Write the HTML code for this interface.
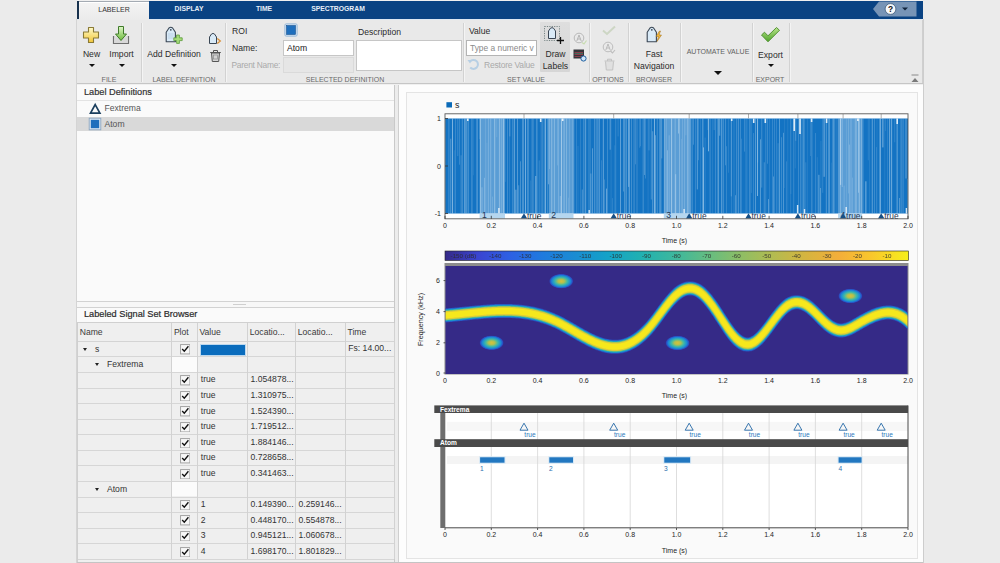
<!DOCTYPE html>
<html><head><meta charset="utf-8">
<style>
html,body{margin:0;padding:0;}
body{width:1000px;height:563px;overflow:hidden;position:relative;background:#ebebeb;font-family:"Liberation Sans",sans-serif;color:#333;}
.a{position:absolute;}
.t{position:absolute;white-space:nowrap;line-height:1;}
.c{transform:translateX(-50%);}
.sep{position:absolute;top:23px;height:59px;width:1px;background:#d2d2d2;border-right:1px solid #f4f4f4;}
.sl{position:absolute;top:75.5px;font-size:7px;color:#6a6a6a;white-space:nowrap;line-height:1;transform:translateX(-50%);}
.bt{position:absolute;font-size:8.6px;color:#2b2b2b;white-space:nowrap;line-height:1;transform:translateX(-50%);}
.arr{position:absolute;width:0;height:0;border-left:3px solid transparent;border-right:3px solid transparent;border-top:3px solid #111;}
.tab{position:absolute;top:6px;font-size:6.8px;font-weight:bold;color:#e6eef7;white-space:nowrap;line-height:1;transform:translateX(-50%);}
</style></head><body>
<!-- app frame -->
<div class="a" style="left:77px;top:0;width:846px;height:563px;background:#f0f0f0;"></div>
<!-- tab bar -->
<div class="a" style="left:77px;top:1px;width:846px;height:17.5px;background:#0a4383;"></div>
<div class="a" style="left:77px;top:18.5px;width:846px;height:1.5px;background:#dde7f1;"></div>
<div class="a" style="left:77px;top:1px;width:2px;height:17.5px;background:#17314d;"></div>
<div class="a" style="left:79px;top:1px;width:70px;height:18px;background:linear-gradient(#f4f4f4,#ebebeb);border-top:1px solid #a4abb3;box-shadow:inset 0 1px 0 #ffffff;"></div>
<div class="tab" style="left:114px;color:#333;font-weight:normal;font-size:7px;">LABELER</div>
<div class="tab" style="left:189px;">DISPLAY</div>
<div class="tab" style="left:264px;">TIME</div>
<div class="tab" style="left:338px;">SPECTROGRAM</div>
<!-- help button -->
<svg class="a" style="left:872px;top:1px;" width="45" height="16" viewBox="0 0 45 16">
<path d="M7 0.5 H44.5 V15.5 H7 L1 8 Z" fill="#7794b6"/>
<circle cx="18.5" cy="8" r="5.4" fill="#f6f8fa" stroke="#2c4d70" stroke-width="0.7"/>
<text x="18.5" y="11" font-size="8.4" font-weight="bold" text-anchor="middle" fill="#111" font-family="Liberation Sans">?</text>
<path d="M30 6.5 L36 6.5 L33 9.5 Z" fill="#10243d"/>
</svg>
<!-- toolstrip -->
<div class="a" style="left:77px;top:20px;width:845px;height:63px;background:#e9e9e9;border-right:1px solid #cfcfcf;"></div>
<div class="a" style="left:77px;top:83.2px;width:846px;height:1.3px;background:#c6c6c6;"></div>
<div class="a" style="left:77px;top:84.5px;width:846px;height:0.8px;background:#fbfbfb;"></div>
<div class="sep" style="left:141px;"></div>
<div class="sep" style="left:225px;"></div>
<div class="sep" style="left:463px;"></div>
<div class="sep" style="left:589px;"></div>
<div class="sep" style="left:627.5px;"></div>
<div class="sep" style="left:680px;"></div>
<div class="sep" style="left:752px;"></div>
<div class="sep" style="left:789px;"></div>
<div class="sl" style="left:109px;">FILE</div>
<div class="sl" style="left:184px;">LABEL DEFINITION</div>
<div class="sl" style="left:345px;">SELECTED DEFINITION</div>
<div class="sl" style="left:526px;">SET VALUE</div>
<div class="sl" style="left:608px;">OPTIONS</div>
<div class="sl" style="left:654px;">BROWSER</div>
<div class="sl" style="left:770px;">EXPORT</div>
<!-- FILE section -->
<svg class="a" style="left:82px;top:26px;" width="18" height="18" viewBox="0 0 18 18">
<defs><linearGradient id="gy" x1="0" y1="0" x2="0" y2="1"><stop offset="0" stop-color="#fffbc8"/><stop offset="1" stop-color="#f2c63a"/></linearGradient></defs>
<path d="M6.5 1.5 H11.5 V6 H16.5 V12 H11.5 V16.5 H6.5 V12 H1.5 V6 H6.5 Z" fill="url(#gy)" stroke="#8a7a36" stroke-width="1.1" stroke-linejoin="round"/>
</svg>
<svg class="a" style="left:112px;top:25px;" width="18" height="20" viewBox="0 0 18 20">
<defs><linearGradient id="gg" x1="0" y1="0" x2="0" y2="1"><stop offset="0" stop-color="#dff7c8"/><stop offset="1" stop-color="#6dbb3c"/></linearGradient></defs>
<path d="M1.5 11 V18.5 H16.5 V11" fill="#dcdcdc" stroke="#6f6f6f" stroke-width="1.2"/>
<rect x="2.2" y="13" width="13.6" height="4.8" fill="#d8d8d8"/>
<path d="M6.5 1.5 H11.5 V9 H14.5 L9 15.5 L3.5 9 H6.5 Z" fill="url(#gg)" stroke="#3f7a2a" stroke-width="1" stroke-linejoin="round"/>
</svg>
<div class="bt" style="left:91.5px;top:50px;">New</div>
<div class="bt" style="left:121.5px;top:50px;">Import</div>
<div class="arr" style="left:88.5px;top:63.5px;"></div>
<div class="arr" style="left:119px;top:63.5px;"></div>
<!-- LABEL DEFINITION -->
<svg class="a" style="left:164px;top:26px;" width="20" height="19" viewBox="0 0 20 19">
<path d="M2.2 15.8 V6.2 L5 2 Q6.8 0.6 8.6 2 L11.4 6.2 V15.8 Z" fill="#d9eaf7" stroke="#3a4654" stroke-width="1.1" stroke-linejoin="round"/>
<circle cx="6.8" cy="3.8" r="0.9" fill="#3e4b5a"/>
<path d="M4 8 H9.5 M4 10 H9.5 M4 12 H9.5" stroke="#a9c5dd" stroke-width="0.6"/>
<path d="M12.6 9 H15.4 V11.8 H18.2 V14.6 H15.4 V17.4 H12.6 V14.6 H9.8 V11.8 H12.6 Z" fill="#a6dc7a" stroke="#5a9a3a" stroke-width="0.8"/>
</svg>
<div class="bt" style="left:174px;top:50px;">Add Definition</div>
<div class="arr" style="left:171px;top:63.5px;"></div>
<svg class="a" style="left:208px;top:32px;" width="14" height="13" viewBox="0 0 14 13">
<path d="M1.5 11.5 V5 L3.5 2 Q5 0.8 6.5 2 L8.5 5 V11.5 Z" fill="#d9eaf7" stroke="#3a4654" stroke-width="1" stroke-linejoin="round"/>
<path d="M9.3 6.5 L12.3 9 L9.3 11.5" fill="none" stroke="#d9913a" stroke-width="1.3"/>
</svg>
<svg class="a" style="left:209px;top:49px;" width="13" height="14" viewBox="0 0 13 14">
<path d="M2.5 4 L3.3 12.5 H9.7 L10.5 4 Z" fill="#d4d4d4" stroke="#555" stroke-width="1"/><path d="M1.2 3.5 H11.8 M4.5 3.5 V1.5 H8.5 V3.5" fill="none" stroke="#555" stroke-width="1"/>
<rect x="4.5" y="6" width="4" height="4" fill="none" stroke="#8a8a8a" stroke-width="0.7"/>
</svg>
<!-- SELECTED DEFINITION -->
<div class="t" style="left:232px;top:26.5px;font-size:8.6px;color:#2b2b2b;">ROI</div>
<div class="t" style="left:232px;top:43.5px;font-size:8.6px;color:#2b2b2b;">Name:</div>

<svg class="a" style="left:284px;top:23px;" width="14" height="14" viewBox="0 0 14 14">
<rect x="0.8" y="0.8" width="12.4" height="12.4" rx="1.5" fill="#cfe0f0" stroke="#8fb2d4" stroke-width="0.8"/>
<rect x="2.6" y="2.6" width="8.8" height="8.8" fill="#1f6fbd" stroke="#0f4f8f" stroke-width="0.6"/>
</svg>
<div class="a" style="left:283px;top:39.5px;width:69px;height:14px;background:#fff;border:1px solid #c6c6c6;"></div>
<div class="t" style="left:287px;top:43.8px;font-size:8.6px;color:#1a1a1a;">Atom</div>
<div class="a" style="left:283px;top:57px;width:69px;height:14px;background:#e6e6e6;border:1px solid #dadada;"></div>
<div class="t" style="left:231.5px;top:60.5px;font-size:8.4px;color:#a9a9a9;letter-spacing:-0.25px;">Parent Name:</div>
<div class="t" style="left:358px;top:27.5px;font-size:8.6px;color:#2b2b2b;">Description</div>
<div class="a" style="left:355.5px;top:40px;width:104px;height:28.5px;background:#fff;border:1px solid #c6c6c6;"></div>
<!-- SET VALUE -->
<div class="t" style="left:469px;top:26.5px;font-size:8.6px;color:#2b2b2b;">Value</div>
<div class="a" style="left:466px;top:39.5px;width:69px;height:14px;background:#fff;border:1px solid #b4b4b4;"></div>
<div class="t" style="left:470px;top:43.5px;font-size:8.4px;color:#8a8a8a;">Type a numeric v</div>
<svg class="a" style="left:467px;top:58px;" width="14" height="13" viewBox="0 0 14 13">
<path d="M3 3.5 A4.5 4.5 0 1 1 3.2 9.5" fill="none" stroke="#b7cfe4" stroke-width="2"/>
<path d="M0.5 2 L5 2 L3 5.5 Z" fill="#b7cfe4"/>
</svg>
<div class="t" style="left:484px;top:60.5px;font-size:8.5px;color:#aaaaaa;letter-spacing:-0.2px;">Restore Value</div>
<div class="a" style="left:540px;top:22px;width:30px;height:50px;background:linear-gradient(#dedede,#d6d6d6);border-radius:1px;"></div>
<svg class="a" style="left:543px;top:25px;" width="22" height="20" viewBox="0 0 22 20">
<rect x="1.5" y="1.5" width="15" height="14" fill="none" stroke="#6b7b7b" stroke-width="0.9" stroke-dasharray="1.2 1.2"/>
<path d="M5.5 13.5 V6 L7.5 3.2 Q9 2.2 10.5 3.2 L12.5 6 V13.5 Z" fill="#d9eaf7" stroke="#3a4654" stroke-width="1" stroke-linejoin="round"/>
<path d="M17.5 12 V19 M14 15.5 H21" stroke="#111" stroke-width="1.3"/>
</svg>
<div class="bt" style="left:555.5px;top:49.5px;">Draw</div>
<div class="bt" style="left:555.5px;top:61.8px;">Labels</div>
<svg class="a" style="left:573px;top:32px;" width="14" height="13" viewBox="0 0 14 13">
<circle cx="6" cy="6" r="4.8" fill="none" stroke="#b9b9b9" stroke-width="1"/>
<path d="M3.8 9 L6 3 L8.2 9 M4.6 7 H7.4" fill="none" stroke="#b0b0b0" stroke-width="0.9"/>
<path d="M9 10.5 L11 12 L13.5 8.5" fill="none" stroke="#c8dcb0" stroke-width="1.2"/>
</svg>
<svg class="a" style="left:573px;top:49px;" width="14" height="13" viewBox="0 0 14 13">
<rect x="0.5" y="0.5" width="10.5" height="9" fill="#34353a"/>
<path d="M1.5 3.5 H10 M1.5 5.5 H10 M1.5 7.5 H10" stroke="#a04050" stroke-width="0.8"/>
<path d="M1.5 4.5 H10" stroke="#3f8f6f" stroke-width="0.6"/>
<circle cx="10.5" cy="9.5" r="2.6" fill="#cfe6fb" stroke="#1f5f9f" stroke-width="1"/>
</svg>
<!-- OPTIONS -->
<svg class="a" style="left:602px;top:25px;" width="14" height="11" viewBox="0 0 14 11">
<path d="M1 5.5 L5 9 L13 1.5" fill="none" stroke="#cdd6c4" stroke-width="2"/>
</svg>
<svg class="a" style="left:602px;top:41px;" width="14" height="13" viewBox="0 0 14 13">
<circle cx="6" cy="6" r="4.8" fill="none" stroke="#bdbdbd" stroke-width="1"/>
<path d="M3.8 9 L6 3 L8.2 9 M4.6 7 H7.4" fill="none" stroke="#b5b5b5" stroke-width="0.9"/>
<path d="M8.5 10 L10.5 12 L13 9" fill="none" stroke="#bdbdbd" stroke-width="1.1"/>
</svg>
<svg class="a" style="left:603px;top:58px;" width="13" height="13" viewBox="0 0 13 13">
<path d="M1.5 3 H11.5 M4.5 3 V1.2 H8.5 V3 M2.5 3.5 L3.3 12 H9.7 L10.5 3.5" fill="#e0e0e0" stroke="#c2c2c2" stroke-width="1"/>
</svg>
<!-- BROWSER -->
<svg class="a" style="left:645px;top:26px;" width="18" height="18" viewBox="0 0 18 18">
<path d="M2.2 15.8 V6.2 L5 2 Q6.8 0.6 8.6 2 L11.4 6.2 V15.8 Z" fill="#d9eaf7" stroke="#3a4654" stroke-width="1.1" stroke-linejoin="round"/>
<circle cx="6.8" cy="3.8" r="0.9" fill="#3e4b5a"/>
<path d="M14.5 5 L11 10.5 H13.5 L12 15.5 L16.5 9 H14 L15.5 5 Z" fill="#f2b83a" stroke="#9a6a1a" stroke-width="0.5"/>
</svg>
<div class="bt" style="left:654px;top:49.5px;">Fast</div>
<div class="bt" style="left:654px;top:61.8px;">Navigation</div>
<!-- AUTOMATE VALUE -->
<div class="t c" style="left:718px;top:47.5px;font-size:7px;color:#5f5f5f;">AUTOMATE VALUE</div>
<div class="arr" style="left:714px;top:70.5px;border-left-width:4.5px;border-right-width:4.5px;border-top-width:4.5px;"></div>
<!-- EXPORT -->
<svg class="a" style="left:760px;top:26px;" width="21" height="18" viewBox="0 0 21 18">
<defs><linearGradient id="gc" x1="0" y1="0" x2="0" y2="1"><stop offset="0" stop-color="#b8e48a"/><stop offset="1" stop-color="#4fa32a"/></linearGradient></defs>
<path d="M1.5 9 L4.5 6.2 L8 9.8 L16.5 1.5 L19.5 4.3 L8 15.8 Z" fill="url(#gc)" stroke="#4a8a2a" stroke-width="0.9" stroke-linejoin="round"/>
</svg>
<div class="bt" style="left:770.5px;top:50.7px;">Export</div>
<div class="arr" style="left:767.5px;top:63.5px;"></div>
<!-- collapse -->
<svg class="a" style="left:910px;top:73.5px;" width="10" height="9" viewBox="0 0 10 9">
<path d="M1.5 1 H8.5" stroke="#8a8a8a" stroke-width="1"/>
<path d="M1.5 8 L5 4 L8.5 8 Z" fill="#7a7a7a"/>
</svg>

<!-- LEFT PANEL -->
<div class="a" style="left:77px;top:85px;width:317px;height:478px;background:#f5f5f5;border-right:1px solid #c9c9c9;"></div>
<div class="a" style="left:77px;top:85px;width:317px;height:216px;background:#fafafa;"></div>
<div class="a" style="left:77px;top:100px;width:317px;height:1px;background:#e3e3e3;"></div>
<div class="t" style="left:84px;top:87.5px;font-size:9.2px;color:#333;-webkit-text-stroke:0.2px #333;">Label Definitions</div>
<svg class="a" style="left:88px;top:102px;" width="14" height="13" viewBox="0 0 14 13">
<path d="M7.2 2.6 L11.9 11.2 H2.5 Z" fill="none" stroke="#1b3f5e" stroke-width="1.7" stroke-linejoin="miter"/>
</svg>
<div class="t" style="left:104.5px;top:104px;font-size:8.6px;color:#555;">Fextrema</div>
<div class="a" style="left:77px;top:117px;width:317px;height:13.5px;background:#d9d9d9;"></div>
<svg class="a" style="left:88px;top:117px;" width="14" height="14" viewBox="0 0 14 14">
<rect x="1.2" y="1.2" width="11.6" height="11.6" fill="#dfe9f3" stroke="#8aa7c2" stroke-width="0.9"/>
<rect x="2.8" y="2.8" width="8.4" height="8.4" fill="#1f6fbd"/>
</svg>
<div class="t" style="left:104.5px;top:119.5px;font-size:8.6px;color:#555;">Atom</div>
<!-- sash -->
<div class="a" style="left:77px;top:301px;width:317px;height:1px;background:#d2d2d2;"></div>
<div class="a" style="left:77px;top:302px;width:317px;height:4.5px;background:#f7f7f7;"></div>
<div class="a" style="left:233px;top:303.5px;width:13px;height:1px;background:#cfcfcf;"></div>
<div class="a" style="left:77px;top:306.5px;width:317px;height:1px;background:#d2d2d2;"></div>
<div class="a" style="left:77px;top:307.5px;width:317px;height:15px;background:#fafafa;"></div>
<div class="t" style="left:84px;top:309.5px;font-size:9.2px;color:#2a2a2a;-webkit-text-stroke:0.2px #2a2a2a;">Labeled Signal Set Browser</div>
<div class="a" style="left:77px;top:322px;width:317px;height:1px;background:#d0d0d0;"></div>
<div class="a" style="left:77.5px;top:323.0px;width:316.5px;height:240.0px;background:#efefef;"></div>
<div class="t" style="left:79.7px;top:328.2px;font-size:8.6px;color:#3a3a3a;">Name</div>
<div class="t" style="left:173.9px;top:328.2px;font-size:8.6px;color:#3a3a3a;">Plot</div>
<div class="t" style="left:199.5px;top:328.2px;font-size:8.6px;color:#3a3a3a;">Value</div>
<div class="t" style="left:249.8px;top:328.2px;font-size:8.6px;color:#3a3a3a;">Locatio...</div>
<div class="t" style="left:297.8px;top:328.2px;font-size:8.6px;color:#3a3a3a;">Locatio...</div>
<div class="t" style="left:347.5px;top:328.2px;font-size:8.6px;color:#3a3a3a;">Time</div>
<div class="a" style="left:77.5px;top:340.8px;width:316.5px;height:1px;background:#d4d4d4;"></div>
<div class="a" style="left:77.5px;top:356.4px;width:316.5px;height:1px;background:#d6d6d6;"></div>
<div class="arr" style="left:83.4px;top:347.6px;border-left-width:2.5px;border-right-width:2.5px;border-top-width:3px;border-top-color:#222;"></div>
<div class="t" style="left:95.0px;top:344.8px;font-size:8.6px;color:#333;">s</div>
<svg class="a" style="left:179.8px;top:344.1px;" width="10.5" height="10.5" viewBox="0 0 11 11"><rect x="0.6" y="0.6" width="9.8" height="9.8" fill="#f7f7f7" stroke="#a0a0a0" stroke-width="1"/><path d="M2.3 5.2 L4.5 7.6 L8.8 2.4" fill="none" stroke="#111" stroke-width="1.4"/></svg>
<div class="a" style="left:200.2px;top:344.3px;width:44px;height:10px;background:#0a6cbd;border:0.5px solid #bcd8ef;"></div>
<div class="t" style="left:348.3px;top:344.3px;font-size:8.6px;color:#333;">Fs: 14.00...</div>
<div class="a" style="left:172.2px;top:357.4px;width:24.6px;height:14.6px;background:#fbfbfb;"></div>
<div class="a" style="left:77.5px;top:371.9px;width:316.5px;height:1px;background:#d6d6d6;"></div>
<div class="arr" style="left:95.4px;top:363.2px;border-left-width:2.5px;border-right-width:2.5px;border-top-width:3px;border-top-color:#222;"></div>
<div class="t" style="left:107.0px;top:360.4px;font-size:8.6px;color:#333;">Fextrema</div>
<div class="a" style="left:77.5px;top:387.5px;width:316.5px;height:1px;background:#d6d6d6;"></div>
<svg class="a" style="left:179.8px;top:375.2px;" width="10.5" height="10.5" viewBox="0 0 11 11"><rect x="0.6" y="0.6" width="9.8" height="9.8" fill="#f7f7f7" stroke="#a0a0a0" stroke-width="1"/><path d="M2.3 5.2 L4.5 7.6 L8.8 2.4" fill="none" stroke="#111" stroke-width="1.4"/></svg>
<div class="t" style="left:200.8px;top:375.4px;font-size:8.6px;color:#333;">true</div>
<div class="t" style="left:250.6px;top:375.4px;font-size:8.6px;color:#333;">1.054878...</div>
<div class="a" style="left:77.5px;top:403.1px;width:316.5px;height:1px;background:#d6d6d6;"></div>
<svg class="a" style="left:179.8px;top:390.8px;" width="10.5" height="10.5" viewBox="0 0 11 11"><rect x="0.6" y="0.6" width="9.8" height="9.8" fill="#f7f7f7" stroke="#a0a0a0" stroke-width="1"/><path d="M2.3 5.2 L4.5 7.6 L8.8 2.4" fill="none" stroke="#111" stroke-width="1.4"/></svg>
<div class="t" style="left:200.8px;top:391.0px;font-size:8.6px;color:#333;">true</div>
<div class="t" style="left:250.6px;top:391.0px;font-size:8.6px;color:#333;">1.310975...</div>
<div class="a" style="left:77.5px;top:418.7px;width:316.5px;height:1px;background:#d6d6d6;"></div>
<svg class="a" style="left:179.8px;top:406.4px;" width="10.5" height="10.5" viewBox="0 0 11 11"><rect x="0.6" y="0.6" width="9.8" height="9.8" fill="#f7f7f7" stroke="#a0a0a0" stroke-width="1"/><path d="M2.3 5.2 L4.5 7.6 L8.8 2.4" fill="none" stroke="#111" stroke-width="1.4"/></svg>
<div class="t" style="left:200.8px;top:406.6px;font-size:8.6px;color:#333;">true</div>
<div class="t" style="left:250.6px;top:406.6px;font-size:8.6px;color:#333;">1.524390...</div>
<div class="a" style="left:77.5px;top:434.2px;width:316.5px;height:1px;background:#d6d6d6;"></div>
<svg class="a" style="left:179.8px;top:421.9px;" width="10.5" height="10.5" viewBox="0 0 11 11"><rect x="0.6" y="0.6" width="9.8" height="9.8" fill="#f7f7f7" stroke="#a0a0a0" stroke-width="1"/><path d="M2.3 5.2 L4.5 7.6 L8.8 2.4" fill="none" stroke="#111" stroke-width="1.4"/></svg>
<div class="t" style="left:200.8px;top:422.1px;font-size:8.6px;color:#333;">true</div>
<div class="t" style="left:250.6px;top:422.1px;font-size:8.6px;color:#333;">1.719512...</div>
<div class="a" style="left:77.5px;top:449.8px;width:316.5px;height:1px;background:#d6d6d6;"></div>
<svg class="a" style="left:179.8px;top:437.5px;" width="10.5" height="10.5" viewBox="0 0 11 11"><rect x="0.6" y="0.6" width="9.8" height="9.8" fill="#f7f7f7" stroke="#a0a0a0" stroke-width="1"/><path d="M2.3 5.2 L4.5 7.6 L8.8 2.4" fill="none" stroke="#111" stroke-width="1.4"/></svg>
<div class="t" style="left:200.8px;top:437.7px;font-size:8.6px;color:#333;">true</div>
<div class="t" style="left:250.6px;top:437.7px;font-size:8.6px;color:#333;">1.884146...</div>
<div class="a" style="left:77.5px;top:465.4px;width:316.5px;height:1px;background:#d6d6d6;"></div>
<svg class="a" style="left:179.8px;top:453.1px;" width="10.5" height="10.5" viewBox="0 0 11 11"><rect x="0.6" y="0.6" width="9.8" height="9.8" fill="#f7f7f7" stroke="#a0a0a0" stroke-width="1"/><path d="M2.3 5.2 L4.5 7.6 L8.8 2.4" fill="none" stroke="#111" stroke-width="1.4"/></svg>
<div class="t" style="left:200.8px;top:453.3px;font-size:8.6px;color:#333;">true</div>
<div class="t" style="left:250.6px;top:453.3px;font-size:8.6px;color:#333;">0.728658...</div>
<div class="a" style="left:77.5px;top:480.9px;width:316.5px;height:1px;background:#d6d6d6;"></div>
<svg class="a" style="left:179.8px;top:468.7px;" width="10.5" height="10.5" viewBox="0 0 11 11"><rect x="0.6" y="0.6" width="9.8" height="9.8" fill="#f7f7f7" stroke="#a0a0a0" stroke-width="1"/><path d="M2.3 5.2 L4.5 7.6 L8.8 2.4" fill="none" stroke="#111" stroke-width="1.4"/></svg>
<div class="t" style="left:200.8px;top:468.9px;font-size:8.6px;color:#333;">true</div>
<div class="t" style="left:250.6px;top:468.9px;font-size:8.6px;color:#333;">0.341463...</div>
<div class="a" style="left:172.2px;top:481.9px;width:24.6px;height:14.6px;background:#fbfbfb;"></div>
<div class="a" style="left:77.5px;top:496.5px;width:316.5px;height:1px;background:#d6d6d6;"></div>
<div class="arr" style="left:95.4px;top:487.7px;border-left-width:2.5px;border-right-width:2.5px;border-top-width:3px;border-top-color:#222;"></div>
<div class="t" style="left:107.0px;top:484.9px;font-size:8.6px;color:#333;">Atom</div>
<div class="a" style="left:77.5px;top:512.1px;width:316.5px;height:1px;background:#d6d6d6;"></div>
<svg class="a" style="left:179.8px;top:499.8px;" width="10.5" height="10.5" viewBox="0 0 11 11"><rect x="0.6" y="0.6" width="9.8" height="9.8" fill="#f7f7f7" stroke="#a0a0a0" stroke-width="1"/><path d="M2.3 5.2 L4.5 7.6 L8.8 2.4" fill="none" stroke="#111" stroke-width="1.4"/></svg>
<div class="t" style="left:200.8px;top:500.0px;font-size:8.6px;color:#333;">1</div>
<div class="t" style="left:250.6px;top:500.0px;font-size:8.6px;color:#333;">0.149390...</div>
<div class="t" style="left:298.6px;top:500.0px;font-size:8.6px;color:#333;">0.259146...</div>
<div class="a" style="left:77.5px;top:527.6px;width:316.5px;height:1px;background:#d6d6d6;"></div>
<svg class="a" style="left:179.8px;top:515.4px;" width="10.5" height="10.5" viewBox="0 0 11 11"><rect x="0.6" y="0.6" width="9.8" height="9.8" fill="#f7f7f7" stroke="#a0a0a0" stroke-width="1"/><path d="M2.3 5.2 L4.5 7.6 L8.8 2.4" fill="none" stroke="#111" stroke-width="1.4"/></svg>
<div class="t" style="left:200.8px;top:515.6px;font-size:8.6px;color:#333;">2</div>
<div class="t" style="left:250.6px;top:515.6px;font-size:8.6px;color:#333;">0.448170...</div>
<div class="t" style="left:298.6px;top:515.6px;font-size:8.6px;color:#333;">0.554878...</div>
<div class="a" style="left:77.5px;top:543.2px;width:316.5px;height:1px;background:#d6d6d6;"></div>
<svg class="a" style="left:179.8px;top:530.9px;" width="10.5" height="10.5" viewBox="0 0 11 11"><rect x="0.6" y="0.6" width="9.8" height="9.8" fill="#f7f7f7" stroke="#a0a0a0" stroke-width="1"/><path d="M2.3 5.2 L4.5 7.6 L8.8 2.4" fill="none" stroke="#111" stroke-width="1.4"/></svg>
<div class="t" style="left:200.8px;top:531.1px;font-size:8.6px;color:#333;">3</div>
<div class="t" style="left:250.6px;top:531.1px;font-size:8.6px;color:#333;">0.945121...</div>
<div class="t" style="left:298.6px;top:531.1px;font-size:8.6px;color:#333;">1.060678...</div>
<div class="a" style="left:77.5px;top:558.8px;width:316.5px;height:1px;background:#d6d6d6;"></div>
<svg class="a" style="left:179.8px;top:546.5px;" width="10.5" height="10.5" viewBox="0 0 11 11"><rect x="0.6" y="0.6" width="9.8" height="9.8" fill="#f7f7f7" stroke="#a0a0a0" stroke-width="1"/><path d="M2.3 5.2 L4.5 7.6 L8.8 2.4" fill="none" stroke="#111" stroke-width="1.4"/></svg>
<div class="t" style="left:200.8px;top:546.7px;font-size:8.6px;color:#333;">4</div>
<div class="t" style="left:250.6px;top:546.7px;font-size:8.6px;color:#333;">1.698170...</div>
<div class="t" style="left:298.6px;top:546.7px;font-size:8.6px;color:#333;">1.801829...</div>
<div class="a" style="left:171.2px;top:323.0px;width:1px;height:236.3px;background:#d2d2d2;"></div>
<div class="a" style="left:196.8px;top:323.0px;width:1px;height:236.3px;background:#d2d2d2;"></div>
<div class="a" style="left:247.1px;top:323.0px;width:1px;height:236.3px;background:#d2d2d2;"></div>
<div class="a" style="left:295.1px;top:323.0px;width:1px;height:236.3px;background:#d2d2d2;"></div>
<div class="a" style="left:344.8px;top:323.0px;width:1px;height:236.3px;background:#d2d2d2;"></div>
<div class="a" style="left:393.5px;top:323.0px;width:1px;height:236.3px;background:#d2d2d2;"></div>
<div class="a" style="left:77.0px;top:323.0px;width:1px;height:240.0px;background:#cfcfcf;"></div>
<!-- divider -->
<div class="a" style="left:395px;top:85px;width:3px;height:478px;background:#ececec;border-right:1px solid #cfcfcf;"></div>
<!-- RIGHT PANEL -->
<div class="a" style="left:399px;top:85px;width:524px;height:477px;background:#fdfdfd;"></div>
<div class="a" style="left:405.8px;top:91.5px;width:510.2px;height:465.5px;background:#fafafa;border:1px solid #e4e4e4;"></div>
<div class="a" style="left:77px;top:562px;width:846px;height:1px;background:#c4c4c4;"></div>
<svg class="a" style="left:399px;top:85px;" width="523" height="477" viewBox="399 85 523 477" font-family="Liberation Sans">
<defs>
<linearGradient id="parula" x1="0" y1="0" x2="1" y2="0"><stop offset="0.00" stop-color="#352a87"/><stop offset="0.07" stop-color="#3a44d0"/><stop offset="0.14" stop-color="#2d60e4"/><stop offset="0.21" stop-color="#1f7ade"/><stop offset="0.28" stop-color="#1a8cd2"/><stop offset="0.35" stop-color="#14a2c8"/><stop offset="0.42" stop-color="#20b0b2"/><stop offset="0.50" stop-color="#3fb89c"/><stop offset="0.57" stop-color="#66bd80"/><stop offset="0.64" stop-color="#8fbe64"/><stop offset="0.71" stop-color="#b4bb50"/><stop offset="0.78" stop-color="#d6b43f"/><stop offset="0.85" stop-color="#f3ae3a"/><stop offset="0.92" stop-color="#f9c72c"/><stop offset="1.00" stop-color="#f6ef1b"/></linearGradient>
<radialGradient id="blob" cx="0.5" cy="0.5" r="0.5"><stop offset="0" stop-color="#d8c03a"/><stop offset="0.25" stop-color="#b0c050"/><stop offset="0.5" stop-color="#3cb8a8"/><stop offset="0.75" stop-color="#1a86d8"/><stop offset="0.9" stop-color="#2a4ac0"/><stop offset="1" stop-color="#352a87" stop-opacity="0"/></radialGradient>
<filter id="bl" x="-5%" y="-20%" width="110%" height="140%"><feGaussianBlur stdDeviation="0.7"/></filter>
<clipPath id="spclip"><rect x="445.5" y="266" width="462" height="108"/></clipPath>
</defs>
<rect x="446.4" y="102.2" width="5.6" height="5.3" fill="#0a6ab8"/>
<text x="455" y="108.2" font-size="8.8" fill="#222">s</text>
<rect x="445" y="114" width="463" height="105" fill="#fff"/>
<rect x="445" y="118.5" width="463" height="95" fill="#1373c3"/>
<rect x="445.5" y="118.5" width="0.5" height="95.0" fill="#d4e9f8" opacity="0.40"/>
<rect x="448.0" y="118.5" width="0.4" height="95.0" fill="#d4e9f8" opacity="0.38"/>
<rect x="449.1" y="118.5" width="0.4" height="95.0" fill="#d4e9f8" opacity="0.24"/>
<rect x="450.4" y="138.7" width="0.8" height="74.8" fill="#d4e9f8" opacity="0.41"/>
<rect x="452.0" y="118.5" width="0.8" height="95.0" fill="#d4e9f8" opacity="0.67"/>
<rect x="453.9" y="150.3" width="0.5" height="63.2" fill="#d4e9f8" opacity="0.22"/>
<rect x="455.2" y="118.5" width="0.4" height="95.0" fill="#d4e9f8" opacity="0.49"/>
<rect x="457.7" y="118.5" width="0.4" height="37.6" fill="#d4e9f8" opacity="0.49"/>
<rect x="459.1" y="118.5" width="0.4" height="46.2" fill="#d4e9f8" opacity="0.48"/>
<rect x="460.8" y="155.3" width="0.5" height="58.2" fill="#d4e9f8" opacity="0.43"/>
<rect x="461.9" y="118.5" width="0.5" height="95.0" fill="#d4e9f8" opacity="0.55"/>
<rect x="464.1" y="118.5" width="0.8" height="95.0" fill="#d4e9f8" opacity="0.45"/>
<rect x="465.6" y="118.5" width="0.8" height="95.0" fill="#d4e9f8" opacity="0.69"/>
<rect x="467.2" y="118.5" width="0.5" height="95.0" fill="#d4e9f8" opacity="0.28"/>
<rect x="468.2" y="118.5" width="0.4" height="95.0" fill="#d4e9f8" opacity="0.58"/>
<rect x="471.3" y="118.5" width="0.5" height="95.0" fill="#d4e9f8" opacity="0.37"/>
<rect x="472.3" y="118.5" width="0.6" height="95.0" fill="#d4e9f8" opacity="0.23"/>
<rect x="473.6" y="118.5" width="0.4" height="56.8" fill="#d4e9f8" opacity="0.23"/>
<rect x="476.4" y="118.5" width="0.6" height="95.0" fill="#d4e9f8" opacity="0.34"/>
<rect x="477.5" y="118.5" width="0.4" height="95.0" fill="#d4e9f8" opacity="0.67"/>
<rect x="479.1" y="118.5" width="0.6" height="20.6" fill="#d4e9f8" opacity="0.23"/>
<rect x="480.1" y="118.5" width="0.6" height="95.0" fill="#d4e9f8" opacity="0.66"/>
<rect x="481.7" y="187.3" width="0.6" height="26.2" fill="#d4e9f8" opacity="0.47"/>
<rect x="484.5" y="177.8" width="0.5" height="35.7" fill="#d4e9f8" opacity="0.55"/>
<rect x="485.3" y="118.5" width="0.5" height="95.0" fill="#d4e9f8" opacity="0.28"/>
<rect x="486.7" y="142.8" width="0.5" height="70.7" fill="#d4e9f8" opacity="0.21"/>
<rect x="488.5" y="118.5" width="0.5" height="95.0" fill="#d4e9f8" opacity="0.41"/>
<rect x="490.6" y="118.5" width="0.5" height="95.0" fill="#d4e9f8" opacity="0.55"/>
<rect x="492.3" y="196.6" width="0.4" height="16.9" fill="#d4e9f8" opacity="0.43"/>
<rect x="494.1" y="118.5" width="0.8" height="95.0" fill="#d4e9f8" opacity="0.40"/>
<rect x="494.8" y="118.5" width="0.6" height="95.0" fill="#d4e9f8" opacity="0.23"/>
<rect x="496.6" y="118.5" width="0.5" height="18.7" fill="#d4e9f8" opacity="0.25"/>
<rect x="498.9" y="118.5" width="0.8" height="95.0" fill="#d4e9f8" opacity="0.25"/>
<rect x="499.6" y="118.5" width="0.5" height="95.0" fill="#d4e9f8" opacity="0.51"/>
<rect x="501.6" y="118.5" width="0.5" height="95.0" fill="#d4e9f8" opacity="0.50"/>
<rect x="503.1" y="118.5" width="0.6" height="95.0" fill="#d4e9f8" opacity="0.70"/>
<rect x="505.3" y="118.5" width="0.4" height="63.3" fill="#d4e9f8" opacity="0.27"/>
<rect x="507.0" y="118.5" width="0.5" height="95.0" fill="#d4e9f8" opacity="0.46"/>
<rect x="509.4" y="118.5" width="0.5" height="95.0" fill="#d4e9f8" opacity="0.27"/>
<rect x="509.5" y="118.5" width="0.8" height="17.9" fill="#d4e9f8" opacity="0.35"/>
<rect x="512.5" y="118.5" width="0.8" height="95.0" fill="#d4e9f8" opacity="0.38"/>
<rect x="514.1" y="118.5" width="0.8" height="95.0" fill="#d4e9f8" opacity="0.47"/>
<rect x="515.5" y="189.7" width="0.8" height="23.8" fill="#d4e9f8" opacity="0.61"/>
<rect x="517.4" y="118.5" width="0.6" height="95.0" fill="#d4e9f8" opacity="0.57"/>
<rect x="518.6" y="185.3" width="0.5" height="28.2" fill="#d4e9f8" opacity="0.57"/>
<rect x="520.2" y="161.3" width="0.5" height="52.2" fill="#d4e9f8" opacity="0.55"/>
<rect x="522.6" y="118.5" width="0.5" height="95.0" fill="#d4e9f8" opacity="0.68"/>
<rect x="523.1" y="118.5" width="0.5" height="95.0" fill="#d4e9f8" opacity="0.44"/>
<rect x="525.2" y="118.5" width="0.8" height="95.0" fill="#d4e9f8" opacity="0.62"/>
<rect x="527.1" y="118.5" width="0.4" height="95.0" fill="#d4e9f8" opacity="0.62"/>
<rect x="528.3" y="118.5" width="0.5" height="95.0" fill="#d4e9f8" opacity="0.44"/>
<rect x="530.6" y="180.5" width="0.5" height="33.0" fill="#d4e9f8" opacity="0.24"/>
<rect x="531.8" y="118.5" width="0.4" height="95.0" fill="#d4e9f8" opacity="0.56"/>
<rect x="532.8" y="118.5" width="0.5" height="95.0" fill="#d4e9f8" opacity="0.50"/>
<rect x="535.4" y="176.0" width="0.8" height="37.5" fill="#d4e9f8" opacity="0.61"/>
<rect x="536.5" y="118.5" width="0.8" height="95.0" fill="#d4e9f8" opacity="0.47"/>
<rect x="538.9" y="160.4" width="0.4" height="53.1" fill="#d4e9f8" opacity="0.46"/>
<rect x="540.7" y="118.5" width="0.5" height="95.0" fill="#d4e9f8" opacity="0.21"/>
<rect x="541.7" y="118.5" width="0.8" height="95.0" fill="#d4e9f8" opacity="0.36"/>
<rect x="543.9" y="118.5" width="0.4" height="95.0" fill="#d4e9f8" opacity="0.66"/>
<rect x="545.0" y="118.5" width="0.8" height="95.0" fill="#d4e9f8" opacity="0.61"/>
<rect x="547.2" y="118.5" width="0.8" height="95.0" fill="#d4e9f8" opacity="0.27"/>
<rect x="548.4" y="118.5" width="0.6" height="65.8" fill="#d4e9f8" opacity="0.59"/>
<rect x="549.4" y="118.5" width="0.5" height="50.5" fill="#d4e9f8" opacity="0.44"/>
<rect x="551.4" y="118.5" width="0.8" height="95.0" fill="#d4e9f8" opacity="0.47"/>
<rect x="553.8" y="118.5" width="0.8" height="95.0" fill="#d4e9f8" opacity="0.23"/>
<rect x="554.2" y="118.5" width="0.4" height="95.0" fill="#d4e9f8" opacity="0.45"/>
<rect x="557.0" y="118.5" width="0.4" height="46.9" fill="#d4e9f8" opacity="0.42"/>
<rect x="558.3" y="118.5" width="0.5" height="95.0" fill="#d4e9f8" opacity="0.43"/>
<rect x="559.9" y="196.0" width="0.5" height="17.5" fill="#d4e9f8" opacity="0.55"/>
<rect x="561.2" y="118.5" width="0.8" height="95.0" fill="#d4e9f8" opacity="0.65"/>
<rect x="563.1" y="118.5" width="0.6" height="95.0" fill="#d4e9f8" opacity="0.26"/>
<rect x="564.2" y="118.5" width="0.5" height="95.0" fill="#d4e9f8" opacity="0.41"/>
<rect x="566.2" y="118.5" width="0.4" height="95.0" fill="#d4e9f8" opacity="0.65"/>
<rect x="568.5" y="197.7" width="0.5" height="15.8" fill="#d4e9f8" opacity="0.27"/>
<rect x="569.4" y="118.5" width="0.4" height="95.0" fill="#d4e9f8" opacity="0.40"/>
<rect x="572.3" y="118.5" width="0.5" height="95.0" fill="#d4e9f8" opacity="0.28"/>
<rect x="573.2" y="118.5" width="0.5" height="95.0" fill="#d4e9f8" opacity="0.41"/>
<rect x="574.1" y="118.5" width="0.5" height="95.0" fill="#d4e9f8" opacity="0.21"/>
<rect x="576.4" y="118.5" width="0.4" height="95.0" fill="#d4e9f8" opacity="0.39"/>
<rect x="577.8" y="146.0" width="0.4" height="67.5" fill="#d4e9f8" opacity="0.26"/>
<rect x="580.4" y="118.5" width="0.4" height="95.0" fill="#d4e9f8" opacity="0.33"/>
<rect x="581.9" y="189.5" width="0.5" height="24.0" fill="#d4e9f8" opacity="0.58"/>
<rect x="583.4" y="118.5" width="0.5" height="95.0" fill="#d4e9f8" opacity="0.40"/>
<rect x="584.8" y="118.5" width="0.6" height="95.0" fill="#d4e9f8" opacity="0.55"/>
<rect x="585.6" y="118.5" width="0.5" height="95.0" fill="#d4e9f8" opacity="0.41"/>
<rect x="588.8" y="118.5" width="0.4" height="95.0" fill="#d4e9f8" opacity="0.60"/>
<rect x="590.3" y="118.5" width="0.4" height="95.0" fill="#d4e9f8" opacity="0.33"/>
<rect x="590.5" y="173.5" width="0.8" height="40.0" fill="#d4e9f8" opacity="0.41"/>
<rect x="592.2" y="148.3" width="0.5" height="65.2" fill="#d4e9f8" opacity="0.67"/>
<rect x="594.1" y="118.5" width="0.5" height="95.0" fill="#d4e9f8" opacity="0.51"/>
<rect x="595.8" y="118.5" width="0.6" height="95.0" fill="#d4e9f8" opacity="0.45"/>
<rect x="597.7" y="118.5" width="0.4" height="95.0" fill="#d4e9f8" opacity="0.70"/>
<rect x="598.8" y="118.5" width="0.8" height="95.0" fill="#d4e9f8" opacity="0.48"/>
<rect x="601.2" y="160.3" width="0.6" height="53.2" fill="#d4e9f8" opacity="0.25"/>
<rect x="602.9" y="118.5" width="0.6" height="95.0" fill="#d4e9f8" opacity="0.69"/>
<rect x="604.1" y="179.5" width="0.5" height="34.0" fill="#d4e9f8" opacity="0.37"/>
<rect x="606.4" y="188.6" width="0.6" height="24.9" fill="#d4e9f8" opacity="0.69"/>
<rect x="607.1" y="118.5" width="0.5" height="95.0" fill="#d4e9f8" opacity="0.42"/>
<rect x="609.8" y="118.5" width="0.6" height="31.2" fill="#d4e9f8" opacity="0.64"/>
<rect x="610.8" y="118.5" width="0.5" height="95.0" fill="#d4e9f8" opacity="0.22"/>
<rect x="612.5" y="198.1" width="0.4" height="15.4" fill="#d4e9f8" opacity="0.33"/>
<rect x="614.6" y="145.3" width="0.5" height="68.2" fill="#d4e9f8" opacity="0.22"/>
<rect x="615.6" y="118.5" width="0.5" height="95.0" fill="#d4e9f8" opacity="0.39"/>
<rect x="617.8" y="118.5" width="0.5" height="17.9" fill="#d4e9f8" opacity="0.32"/>
<rect x="620.0" y="118.5" width="0.5" height="95.0" fill="#d4e9f8" opacity="0.40"/>
<rect x="620.3" y="118.5" width="0.5" height="95.0" fill="#d4e9f8" opacity="0.51"/>
<rect x="623.5" y="118.5" width="0.5" height="73.0" fill="#d4e9f8" opacity="0.53"/>
<rect x="624.2" y="118.5" width="0.5" height="95.0" fill="#d4e9f8" opacity="0.56"/>
<rect x="625.7" y="118.5" width="0.8" height="95.0" fill="#d4e9f8" opacity="0.52"/>
<rect x="628.3" y="118.5" width="0.8" height="68.4" fill="#d4e9f8" opacity="0.51"/>
<rect x="628.8" y="118.5" width="0.8" height="95.0" fill="#d4e9f8" opacity="0.58"/>
<rect x="631.5" y="118.5" width="0.4" height="95.0" fill="#d4e9f8" opacity="0.61"/>
<rect x="633.3" y="118.5" width="0.5" height="95.0" fill="#d4e9f8" opacity="0.24"/>
<rect x="634.6" y="118.5" width="0.4" height="95.0" fill="#d4e9f8" opacity="0.39"/>
<rect x="635.2" y="118.5" width="0.4" height="45.8" fill="#d4e9f8" opacity="0.51"/>
<rect x="636.8" y="118.5" width="0.4" height="95.0" fill="#d4e9f8" opacity="0.57"/>
<rect x="639.4" y="118.5" width="0.8" height="29.2" fill="#d4e9f8" opacity="0.23"/>
<rect x="640.2" y="118.5" width="0.5" height="27.7" fill="#d4e9f8" opacity="0.32"/>
<rect x="642.8" y="118.5" width="0.6" height="95.0" fill="#d4e9f8" opacity="0.45"/>
<rect x="644.2" y="118.5" width="0.5" height="56.5" fill="#d4e9f8" opacity="0.58"/>
<rect x="645.2" y="118.5" width="0.5" height="60.0" fill="#d4e9f8" opacity="0.37"/>
<rect x="647.8" y="118.5" width="0.5" height="95.0" fill="#d4e9f8" opacity="0.21"/>
<rect x="648.8" y="118.5" width="0.4" height="31.9" fill="#d4e9f8" opacity="0.55"/>
<rect x="650.9" y="118.5" width="0.6" height="81.0" fill="#d4e9f8" opacity="0.43"/>
<rect x="652.6" y="131.2" width="0.5" height="82.3" fill="#d4e9f8" opacity="0.69"/>
<rect x="654.1" y="118.5" width="0.8" height="95.0" fill="#d4e9f8" opacity="0.68"/>
<rect x="655.4" y="135.2" width="0.5" height="78.3" fill="#d4e9f8" opacity="0.66"/>
<rect x="656.8" y="118.5" width="0.8" height="95.0" fill="#d4e9f8" opacity="0.33"/>
<rect x="659.3" y="118.5" width="0.8" height="95.0" fill="#d4e9f8" opacity="0.34"/>
<rect x="660.6" y="118.5" width="0.6" height="95.0" fill="#d4e9f8" opacity="0.65"/>
<rect x="661.7" y="118.5" width="0.4" height="39.9" fill="#d4e9f8" opacity="0.67"/>
<rect x="664.5" y="118.5" width="0.6" height="95.0" fill="#d4e9f8" opacity="0.37"/>
<rect x="666.3" y="118.5" width="0.4" height="95.0" fill="#d4e9f8" opacity="0.36"/>
<rect x="667.2" y="150.3" width="0.5" height="63.2" fill="#d4e9f8" opacity="0.56"/>
<rect x="668.8" y="135.3" width="0.6" height="78.2" fill="#d4e9f8" opacity="0.40"/>
<rect x="671.4" y="118.5" width="0.5" height="95.0" fill="#d4e9f8" opacity="0.63"/>
<rect x="671.6" y="118.5" width="0.5" height="95.0" fill="#d4e9f8" opacity="0.52"/>
<rect x="674.8" y="118.5" width="0.6" height="95.0" fill="#d4e9f8" opacity="0.46"/>
<rect x="675.5" y="174.2" width="0.6" height="39.3" fill="#d4e9f8" opacity="0.64"/>
<rect x="678.0" y="118.5" width="0.8" height="15.0" fill="#d4e9f8" opacity="0.47"/>
<rect x="679.4" y="118.5" width="0.6" height="95.0" fill="#d4e9f8" opacity="0.51"/>
<rect x="681.2" y="138.9" width="0.6" height="74.6" fill="#d4e9f8" opacity="0.22"/>
<rect x="682.2" y="118.5" width="0.5" height="95.0" fill="#d4e9f8" opacity="0.34"/>
<rect x="684.3" y="118.5" width="0.5" height="95.0" fill="#d4e9f8" opacity="0.40"/>
<rect x="685.6" y="118.5" width="0.6" height="16.8" fill="#d4e9f8" opacity="0.26"/>
<rect x="687.2" y="118.5" width="0.6" height="95.0" fill="#d4e9f8" opacity="0.48"/>
<rect x="688.6" y="118.5" width="0.6" height="95.0" fill="#d4e9f8" opacity="0.41"/>
<rect x="690.1" y="118.5" width="0.5" height="95.0" fill="#d4e9f8" opacity="0.37"/>
<rect x="691.8" y="118.5" width="0.5" height="95.0" fill="#d4e9f8" opacity="0.60"/>
<rect x="693.1" y="118.5" width="0.6" height="26.2" fill="#d4e9f8" opacity="0.39"/>
<rect x="695.1" y="118.5" width="0.4" height="95.0" fill="#d4e9f8" opacity="0.45"/>
<rect x="696.9" y="118.5" width="0.8" height="70.9" fill="#d4e9f8" opacity="0.46"/>
<rect x="698.1" y="118.5" width="0.5" height="41.7" fill="#d4e9f8" opacity="0.39"/>
<rect x="700.2" y="118.5" width="0.4" height="95.0" fill="#d4e9f8" opacity="0.26"/>
<rect x="702.6" y="118.5" width="0.6" height="95.0" fill="#d4e9f8" opacity="0.68"/>
<rect x="703.1" y="147.4" width="0.8" height="66.1" fill="#d4e9f8" opacity="0.63"/>
<rect x="704.8" y="137.6" width="0.5" height="75.9" fill="#d4e9f8" opacity="0.28"/>
<rect x="707.6" y="118.5" width="0.6" height="11.6" fill="#d4e9f8" opacity="0.24"/>
<rect x="708.1" y="118.5" width="0.8" height="32.8" fill="#d4e9f8" opacity="0.66"/>
<rect x="709.8" y="118.5" width="0.5" height="95.0" fill="#d4e9f8" opacity="0.46"/>
<rect x="712.5" y="118.5" width="0.4" height="95.0" fill="#d4e9f8" opacity="0.24"/>
<rect x="713.8" y="118.5" width="0.6" height="11.6" fill="#d4e9f8" opacity="0.33"/>
<rect x="715.4" y="118.5" width="0.6" height="95.0" fill="#d4e9f8" opacity="0.34"/>
<rect x="717.6" y="118.5" width="0.5" height="95.0" fill="#d4e9f8" opacity="0.44"/>
<rect x="718.2" y="118.5" width="0.6" height="95.0" fill="#d4e9f8" opacity="0.55"/>
<rect x="719.5" y="118.5" width="0.6" height="17.2" fill="#d4e9f8" opacity="0.64"/>
<rect x="721.5" y="118.5" width="0.6" height="95.0" fill="#d4e9f8" opacity="0.66"/>
<rect x="722.9" y="118.5" width="0.5" height="95.0" fill="#d4e9f8" opacity="0.56"/>
<rect x="725.1" y="118.5" width="0.4" height="46.8" fill="#d4e9f8" opacity="0.60"/>
<rect x="726.4" y="146.2" width="0.5" height="67.3" fill="#d4e9f8" opacity="0.36"/>
<rect x="728.1" y="118.5" width="0.5" height="54.2" fill="#d4e9f8" opacity="0.25"/>
<rect x="730.9" y="118.5" width="0.6" height="77.9" fill="#d4e9f8" opacity="0.41"/>
<rect x="731.3" y="118.5" width="0.6" height="95.0" fill="#d4e9f8" opacity="0.23"/>
<rect x="733.7" y="118.5" width="0.6" height="95.0" fill="#d4e9f8" opacity="0.23"/>
<rect x="735.0" y="195.2" width="0.5" height="18.3" fill="#d4e9f8" opacity="0.57"/>
<rect x="736.6" y="118.5" width="0.5" height="95.0" fill="#d4e9f8" opacity="0.53"/>
<rect x="738.5" y="118.5" width="0.5" height="95.0" fill="#d4e9f8" opacity="0.53"/>
<rect x="740.0" y="118.5" width="0.5" height="95.0" fill="#d4e9f8" opacity="0.42"/>
<rect x="741.1" y="138.7" width="0.4" height="74.8" fill="#d4e9f8" opacity="0.38"/>
<rect x="744.2" y="118.5" width="0.5" height="33.1" fill="#d4e9f8" opacity="0.39"/>
<rect x="745.6" y="118.5" width="0.4" height="95.0" fill="#d4e9f8" opacity="0.22"/>
<rect x="746.6" y="118.5" width="0.6" height="95.0" fill="#d4e9f8" opacity="0.30"/>
<rect x="749.1" y="118.5" width="0.4" height="95.0" fill="#d4e9f8" opacity="0.52"/>
<rect x="750.3" y="118.5" width="0.6" height="95.0" fill="#d4e9f8" opacity="0.22"/>
<rect x="751.0" y="118.5" width="0.4" height="74.4" fill="#d4e9f8" opacity="0.33"/>
<rect x="753.1" y="133.1" width="0.5" height="80.4" fill="#d4e9f8" opacity="0.37"/>
<rect x="755.5" y="118.5" width="0.5" height="95.0" fill="#d4e9f8" opacity="0.66"/>
<rect x="757.1" y="118.5" width="0.8" height="77.5" fill="#d4e9f8" opacity="0.66"/>
<rect x="757.6" y="118.5" width="0.5" height="44.1" fill="#d4e9f8" opacity="0.25"/>
<rect x="760.5" y="139.3" width="0.5" height="74.2" fill="#d4e9f8" opacity="0.66"/>
<rect x="761.7" y="118.5" width="0.4" height="69.1" fill="#d4e9f8" opacity="0.60"/>
<rect x="763.8" y="162.3" width="0.8" height="51.2" fill="#d4e9f8" opacity="0.32"/>
<rect x="765.4" y="118.5" width="0.8" height="95.0" fill="#d4e9f8" opacity="0.24"/>
<rect x="767.0" y="118.5" width="0.5" height="45.2" fill="#d4e9f8" opacity="0.40"/>
<rect x="768.3" y="199.1" width="0.5" height="14.4" fill="#d4e9f8" opacity="0.69"/>
<rect x="769.5" y="118.5" width="0.4" height="95.0" fill="#d4e9f8" opacity="0.30"/>
<rect x="772.4" y="118.5" width="0.6" height="95.0" fill="#d4e9f8" opacity="0.29"/>
<rect x="773.2" y="176.5" width="0.5" height="37.0" fill="#d4e9f8" opacity="0.57"/>
<rect x="774.3" y="118.5" width="0.5" height="95.0" fill="#d4e9f8" opacity="0.35"/>
<rect x="776.3" y="118.5" width="0.5" height="95.0" fill="#d4e9f8" opacity="0.30"/>
<rect x="777.8" y="143.2" width="0.5" height="70.3" fill="#d4e9f8" opacity="0.34"/>
<rect x="779.1" y="118.5" width="0.5" height="95.0" fill="#d4e9f8" opacity="0.70"/>
<rect x="781.1" y="137.2" width="0.4" height="76.3" fill="#d4e9f8" opacity="0.53"/>
<rect x="783.1" y="132.8" width="0.5" height="80.7" fill="#d4e9f8" opacity="0.62"/>
<rect x="784.5" y="118.5" width="0.4" height="69.5" fill="#d4e9f8" opacity="0.23"/>
<rect x="786.0" y="161.4" width="0.4" height="52.1" fill="#d4e9f8" opacity="0.39"/>
<rect x="787.7" y="118.5" width="0.4" height="95.0" fill="#d4e9f8" opacity="0.25"/>
<rect x="790.0" y="118.5" width="0.5" height="95.0" fill="#d4e9f8" opacity="0.22"/>
<rect x="790.7" y="118.5" width="0.5" height="75.5" fill="#d4e9f8" opacity="0.22"/>
<rect x="793.6" y="118.5" width="0.5" height="95.0" fill="#d4e9f8" opacity="0.40"/>
<rect x="794.9" y="118.5" width="0.4" height="49.9" fill="#d4e9f8" opacity="0.30"/>
<rect x="795.7" y="118.5" width="0.4" height="22.3" fill="#d4e9f8" opacity="0.60"/>
<rect x="798.1" y="118.5" width="0.5" height="95.0" fill="#d4e9f8" opacity="0.40"/>
<rect x="800.5" y="118.5" width="0.5" height="95.0" fill="#d4e9f8" opacity="0.41"/>
<rect x="801.8" y="118.5" width="0.5" height="95.0" fill="#d4e9f8" opacity="0.41"/>
<rect x="803.4" y="118.5" width="0.5" height="95.0" fill="#d4e9f8" opacity="0.52"/>
<rect x="804.5" y="118.5" width="0.4" height="95.0" fill="#d4e9f8" opacity="0.42"/>
<rect x="805.7" y="162.3" width="0.4" height="51.2" fill="#d4e9f8" opacity="0.40"/>
<rect x="807.4" y="118.5" width="0.4" height="95.0" fill="#d4e9f8" opacity="0.23"/>
<rect x="810.1" y="118.5" width="0.6" height="37.5" fill="#d4e9f8" opacity="0.24"/>
<rect x="811.3" y="118.5" width="0.5" height="95.0" fill="#d4e9f8" opacity="0.37"/>
<rect x="812.4" y="118.5" width="0.4" height="95.0" fill="#d4e9f8" opacity="0.25"/>
<rect x="815.1" y="133.0" width="0.5" height="80.5" fill="#d4e9f8" opacity="0.35"/>
<rect x="816.9" y="157.2" width="0.5" height="56.3" fill="#d4e9f8" opacity="0.23"/>
<rect x="818.5" y="174.8" width="0.8" height="38.7" fill="#d4e9f8" opacity="0.54"/>
<rect x="820.1" y="188.0" width="0.8" height="25.5" fill="#d4e9f8" opacity="0.40"/>
<rect x="820.7" y="141.0" width="0.5" height="72.5" fill="#d4e9f8" opacity="0.22"/>
<rect x="822.6" y="118.5" width="0.5" height="74.3" fill="#d4e9f8" opacity="0.32"/>
<rect x="823.7" y="118.5" width="0.8" height="58.3" fill="#d4e9f8" opacity="0.62"/>
<rect x="825.9" y="118.5" width="0.6" height="95.0" fill="#d4e9f8" opacity="0.50"/>
<rect x="828.0" y="118.5" width="0.5" height="95.0" fill="#d4e9f8" opacity="0.52"/>
<rect x="829.0" y="118.5" width="0.6" height="95.0" fill="#d4e9f8" opacity="0.53"/>
<rect x="831.0" y="162.6" width="0.4" height="50.9" fill="#d4e9f8" opacity="0.20"/>
<rect x="832.7" y="118.5" width="0.8" height="95.0" fill="#d4e9f8" opacity="0.59"/>
<rect x="833.9" y="118.5" width="0.6" height="95.0" fill="#d4e9f8" opacity="0.40"/>
<rect x="835.8" y="118.5" width="0.5" height="95.0" fill="#d4e9f8" opacity="0.25"/>
<rect x="837.7" y="118.5" width="0.4" height="95.0" fill="#d4e9f8" opacity="0.22"/>
<rect x="840.1" y="118.5" width="0.5" height="95.0" fill="#d4e9f8" opacity="0.59"/>
<rect x="840.3" y="118.5" width="0.8" height="66.4" fill="#d4e9f8" opacity="0.65"/>
<rect x="841.9" y="118.5" width="0.4" height="68.5" fill="#d4e9f8" opacity="0.70"/>
<rect x="843.8" y="185.6" width="0.6" height="27.9" fill="#d4e9f8" opacity="0.34"/>
<rect x="846.3" y="118.5" width="0.5" height="95.0" fill="#d4e9f8" opacity="0.23"/>
<rect x="848.1" y="118.5" width="0.5" height="74.9" fill="#d4e9f8" opacity="0.36"/>
<rect x="849.2" y="144.6" width="0.5" height="68.9" fill="#d4e9f8" opacity="0.45"/>
<rect x="850.6" y="118.5" width="0.8" height="95.0" fill="#d4e9f8" opacity="0.32"/>
<rect x="852.1" y="177.6" width="0.6" height="35.9" fill="#d4e9f8" opacity="0.28"/>
<rect x="854.9" y="118.5" width="0.5" height="95.0" fill="#d4e9f8" opacity="0.60"/>
<rect x="856.4" y="118.5" width="0.4" height="95.0" fill="#d4e9f8" opacity="0.52"/>
<rect x="858.2" y="118.5" width="0.8" height="74.2" fill="#d4e9f8" opacity="0.46"/>
<rect x="858.8" y="118.5" width="0.8" height="95.0" fill="#d4e9f8" opacity="0.51"/>
<rect x="861.4" y="118.5" width="0.5" height="95.0" fill="#d4e9f8" opacity="0.39"/>
<rect x="861.9" y="118.5" width="0.5" height="95.0" fill="#d4e9f8" opacity="0.58"/>
<rect x="863.6" y="118.5" width="0.4" height="95.0" fill="#d4e9f8" opacity="0.35"/>
<rect x="865.5" y="181.3" width="0.8" height="32.2" fill="#d4e9f8" opacity="0.66"/>
<rect x="867.9" y="118.5" width="0.5" height="41.8" fill="#d4e9f8" opacity="0.27"/>
<rect x="869.2" y="118.5" width="0.4" height="95.0" fill="#d4e9f8" opacity="0.27"/>
<rect x="871.0" y="118.5" width="0.4" height="95.0" fill="#d4e9f8" opacity="0.23"/>
<rect x="872.1" y="118.5" width="0.8" height="95.0" fill="#d4e9f8" opacity="0.38"/>
<rect x="874.2" y="118.5" width="0.8" height="95.0" fill="#d4e9f8" opacity="0.27"/>
<rect x="876.3" y="147.1" width="0.5" height="66.4" fill="#d4e9f8" opacity="0.27"/>
<rect x="876.8" y="118.5" width="0.4" height="95.0" fill="#d4e9f8" opacity="0.23"/>
<rect x="879.3" y="118.5" width="0.5" height="95.0" fill="#d4e9f8" opacity="0.40"/>
<rect x="879.9" y="118.5" width="0.8" height="95.0" fill="#d4e9f8" opacity="0.65"/>
<rect x="882.5" y="118.5" width="0.8" height="28.9" fill="#d4e9f8" opacity="0.67"/>
<rect x="884.7" y="118.5" width="0.4" height="95.0" fill="#d4e9f8" opacity="0.23"/>
<rect x="885.2" y="118.5" width="0.5" height="12.4" fill="#d4e9f8" opacity="0.23"/>
<rect x="887.4" y="118.5" width="0.5" height="95.0" fill="#d4e9f8" opacity="0.27"/>
<rect x="889.2" y="118.5" width="0.8" height="95.0" fill="#d4e9f8" opacity="0.52"/>
<rect x="890.8" y="118.5" width="0.8" height="95.0" fill="#d4e9f8" opacity="0.35"/>
<rect x="891.5" y="118.5" width="0.6" height="95.0" fill="#d4e9f8" opacity="0.56"/>
<rect x="894.5" y="118.5" width="0.6" height="23.8" fill="#d4e9f8" opacity="0.24"/>
<rect x="896.4" y="118.5" width="0.5" height="95.0" fill="#d4e9f8" opacity="0.32"/>
<rect x="897.0" y="118.5" width="0.5" height="95.0" fill="#d4e9f8" opacity="0.56"/>
<rect x="899.0" y="198.0" width="0.6" height="15.5" fill="#d4e9f8" opacity="0.54"/>
<rect x="900.2" y="118.5" width="0.5" height="95.0" fill="#d4e9f8" opacity="0.24"/>
<rect x="901.7" y="118.5" width="0.5" height="95.0" fill="#d4e9f8" opacity="0.62"/>
<rect x="903.3" y="118.5" width="0.5" height="95.0" fill="#d4e9f8" opacity="0.30"/>
<rect x="905.7" y="118.5" width="0.6" height="60.0" fill="#d4e9f8" opacity="0.65"/>
<rect x="907.4" y="178.8" width="0.8" height="34.7" fill="#d4e9f8" opacity="0.43"/>
<rect x="467.0" y="118.5" width="1.6" height="2.5" fill="#f2f8fd" opacity="0.9"/>
<rect x="539.9" y="118.5" width="1.6" height="3.5" fill="#f2f8fd" opacity="0.9"/>
<rect x="561.9" y="118.5" width="1.6" height="2.5" fill="#f2f8fd" opacity="0.9"/>
<rect x="730.9" y="118.5" width="1.6" height="2.5" fill="#f2f8fd" opacity="0.9"/>
<rect x="752.9" y="118.5" width="1.6" height="4.5" fill="#f2f8fd" opacity="0.9"/>
<rect x="764.5" y="118.5" width="1.6" height="4.5" fill="#f2f8fd" opacity="0.9"/>
<rect x="793.4" y="118.5" width="1.6" height="12.5" fill="#f2f8fd" opacity="0.9"/>
<rect x="799.2" y="118.5" width="1.6" height="15.5" fill="#f2f8fd" opacity="0.9"/>
<rect x="810.8" y="118.5" width="1.6" height="3.5" fill="#f2f8fd" opacity="0.9"/>
<rect x="825.8" y="118.5" width="1.6" height="4.5" fill="#f2f8fd" opacity="0.9"/>
<rect x="857.1" y="118.5" width="1.6" height="2.5" fill="#f2f8fd" opacity="0.9"/>
<rect x="896.4" y="118.5" width="1.6" height="5.5" fill="#f2f8fd" opacity="0.9"/>
<rect x="498.2" y="208.0" width="1.4" height="5.5" fill="#f2f8fd" opacity="0.85"/>
<rect x="588.5" y="210.0" width="1.4" height="3.5" fill="#f2f8fd" opacity="0.85"/>
<rect x="683.4" y="209.0" width="1.4" height="4.5" fill="#f2f8fd" opacity="0.85"/>
<rect x="796.9" y="205.0" width="1.4" height="8.5" fill="#f2f8fd" opacity="0.85"/>
<rect x="803.8" y="209.0" width="1.4" height="4.5" fill="#f2f8fd" opacity="0.85"/>
<rect x="845.5" y="207.0" width="1.4" height="6.5" fill="#f2f8fd" opacity="0.85"/>
<rect x="905.7" y="208.0" width="1.4" height="5.5" fill="#f2f8fd" opacity="0.85"/>
<rect x="479.6" y="118.5" width="25.4" height="95" fill="#ffffff" opacity="0.3"/>
<rect x="479.6" y="213.5" width="25.4" height="5" fill="#b5d6ef"/>
<rect x="548.8" y="118.5" width="24.7" height="95" fill="#ffffff" opacity="0.3"/>
<rect x="548.8" y="213.5" width="24.7" height="5" fill="#b5d6ef"/>
<rect x="663.8" y="118.5" width="26.8" height="95" fill="#ffffff" opacity="0.3"/>
<rect x="663.8" y="213.5" width="26.8" height="5" fill="#b5d6ef"/>
<rect x="838.1" y="118.5" width="24.0" height="95" fill="#ffffff" opacity="0.3"/>
<rect x="838.1" y="213.5" width="24.0" height="5" fill="#b5d6ef"/>
<text x="482.1" y="217.8" font-size="8.6" fill="#1d3452">1</text>
<text x="551.3" y="217.8" font-size="8.6" fill="#1d3452">2</text>
<text x="666.3" y="217.8" font-size="8.6" fill="#1d3452">3</text>
<text x="840.6" y="217.8" font-size="8.6" fill="#1d3452">4</text>
<path d="M689.2 213.2 L686.0 218.6 L692.4 218.6 Z" fill="#174f85"/>
<text x="692.2" y="219.2" font-size="8.4" fill="#1d3452">true</text>
<path d="M748.5 213.2 L745.3 218.6 L751.7 218.6 Z" fill="#174f85"/>
<text x="751.5" y="219.2" font-size="8.4" fill="#1d3452">true</text>
<path d="M797.9 213.2 L794.7 218.6 L801.1 218.6 Z" fill="#174f85"/>
<text x="800.9" y="219.2" font-size="8.4" fill="#1d3452">true</text>
<path d="M843.1 213.2 L839.9 218.6 L846.3 218.6 Z" fill="#174f85"/>
<text x="846.1" y="219.2" font-size="8.4" fill="#1d3452">true</text>
<path d="M881.2 213.2 L878.0 218.6 L884.4 218.6 Z" fill="#174f85"/>
<text x="884.2" y="219.2" font-size="8.4" fill="#1d3452">true</text>
<path d="M613.7 213.2 L610.5 218.6 L616.9 218.6 Z" fill="#174f85"/>
<text x="616.7" y="219.2" font-size="8.4" fill="#1d3452">true</text>
<path d="M524.0 213.2 L520.8 218.6 L527.2 218.6 Z" fill="#174f85"/>
<text x="527.0" y="219.2" font-size="8.4" fill="#1d3452">true</text>
<path d="M689.2 114 V118.5" stroke="#9a9a9a" stroke-width="0.8"/>
<path d="M748.5 114 V118.5" stroke="#9a9a9a" stroke-width="0.8"/>
<path d="M797.9 114 V118.5" stroke="#9a9a9a" stroke-width="0.8"/>
<path d="M843.1 114 V118.5" stroke="#9a9a9a" stroke-width="0.8"/>
<path d="M881.2 114 V118.5" stroke="#9a9a9a" stroke-width="0.8"/>
<path d="M613.7 114 V118.5" stroke="#9a9a9a" stroke-width="0.8"/>
<path d="M524.0 114 V118.5" stroke="#9a9a9a" stroke-width="0.8"/>
<rect x="445" y="113.8" width="463" height="105" fill="none" stroke="#5a5a5a" stroke-width="0.9"/>
<path d="M445 118.5 h3" stroke="#333" stroke-width="0.8"/>
<text x="441" y="121.1" font-size="7" fill="#262626" text-anchor="end">1</text>
<path d="M445 166.0 h3" stroke="#333" stroke-width="0.8"/>
<text x="441" y="168.6" font-size="7" fill="#262626" text-anchor="end">0</text>
<path d="M445 213.5 h3" stroke="#333" stroke-width="0.8"/>
<text x="441" y="216.1" font-size="7" fill="#262626" text-anchor="end">-1</text>
<path d="M445.0 218.8 v-3" stroke="#333" stroke-width="0.8"/>
<text x="445.0" y="228" font-size="7" fill="#262626" text-anchor="middle">0</text>
<path d="M491.3 218.8 v-3" stroke="#333" stroke-width="0.8"/>
<text x="491.3" y="228" font-size="7" fill="#262626" text-anchor="middle">0.2</text>
<path d="M537.6 218.8 v-3" stroke="#333" stroke-width="0.8"/>
<text x="537.6" y="228" font-size="7" fill="#262626" text-anchor="middle">0.4</text>
<path d="M583.9 218.8 v-3" stroke="#333" stroke-width="0.8"/>
<text x="583.9" y="228" font-size="7" fill="#262626" text-anchor="middle">0.6</text>
<path d="M630.2 218.8 v-3" stroke="#333" stroke-width="0.8"/>
<text x="630.2" y="228" font-size="7" fill="#262626" text-anchor="middle">0.8</text>
<path d="M676.5 218.8 v-3" stroke="#333" stroke-width="0.8"/>
<text x="676.5" y="228" font-size="7" fill="#262626" text-anchor="middle">1.0</text>
<path d="M722.8 218.8 v-3" stroke="#333" stroke-width="0.8"/>
<text x="722.8" y="228" font-size="7" fill="#262626" text-anchor="middle">1.2</text>
<path d="M769.1 218.8 v-3" stroke="#333" stroke-width="0.8"/>
<text x="769.1" y="228" font-size="7" fill="#262626" text-anchor="middle">1.4</text>
<path d="M815.4 218.8 v-3" stroke="#333" stroke-width="0.8"/>
<text x="815.4" y="228" font-size="7" fill="#262626" text-anchor="middle">1.6</text>
<path d="M861.7 218.8 v-3" stroke="#333" stroke-width="0.8"/>
<text x="861.7" y="228" font-size="7" fill="#262626" text-anchor="middle">1.8</text>
<path d="M908.0 218.8 v-3" stroke="#333" stroke-width="0.8"/>
<text x="908.0" y="228" font-size="7" fill="#262626" text-anchor="middle">2.0</text>
<text x="674.5" y="243" font-size="7" fill="#262626" text-anchor="middle">Time (s)</text>
<rect x="445" y="251" width="463.5" height="9.5" fill="url(#parula)" stroke="#222" stroke-width="0.6"/>
<text x="463.5" y="258.3" font-size="6.2" fill="#2a2a2a" text-anchor="middle" opacity="0.85">-150 (dB)</text>
<text x="495.2" y="258.3" font-size="6.2" fill="#2a2a2a" text-anchor="middle" opacity="0.85">-140</text>
<text x="525.2" y="258.3" font-size="6.2" fill="#2a2a2a" text-anchor="middle" opacity="0.85">-130</text>
<text x="556.4" y="258.3" font-size="6.2" fill="#2a2a2a" text-anchor="middle" opacity="0.85">-120</text>
<text x="585.2" y="258.3" font-size="6.2" fill="#2a2a2a" text-anchor="middle" opacity="0.85">-110</text>
<text x="615.7" y="258.3" font-size="6.2" fill="#2a2a2a" text-anchor="middle" opacity="0.85">-100</text>
<text x="646.4" y="258.3" font-size="6.2" fill="#2a2a2a" text-anchor="middle" opacity="0.85">-90</text>
<text x="676.2" y="258.3" font-size="6.2" fill="#2a2a2a" text-anchor="middle" opacity="0.85">-80</text>
<text x="706.8" y="258.3" font-size="6.2" fill="#2a2a2a" text-anchor="middle" opacity="0.85">-70</text>
<text x="736.2" y="258.3" font-size="6.2" fill="#2a2a2a" text-anchor="middle" opacity="0.85">-60</text>
<text x="766.8" y="258.3" font-size="6.2" fill="#2a2a2a" text-anchor="middle" opacity="0.85">-50</text>
<text x="796.2" y="258.3" font-size="6.2" fill="#2a2a2a" text-anchor="middle" opacity="0.85">-40</text>
<text x="826.9" y="258.3" font-size="6.2" fill="#2a2a2a" text-anchor="middle" opacity="0.85">-30</text>
<text x="857.5" y="258.3" font-size="6.2" fill="#2a2a2a" text-anchor="middle" opacity="0.85">-20</text>
<text x="886.9" y="258.3" font-size="6.2" fill="#2a2a2a" text-anchor="middle" opacity="0.85">-10</text>
<rect x="444.5" y="263" width="464" height="111.5" fill="#8c8c8c"/>
<rect x="445.5" y="266" width="462" height="108" fill="#352a87"/>
<g clip-path="url(#spclip)">
<g filter="url(#bl)">
<path d="M440 308.7 L441 308.7 L442 308.6 L443 308.5 L444 308.5 L445 308.4 L446 308.3 L447 308.3 L448 308.2 L449 308.1 L450 308.0 L451 307.9 L452 307.9 L453 307.8 L454 307.7 L455 307.6 L456 307.5 L457 307.4 L458 307.3 L459 307.2 L460 307.1 L461 307.0 L462 306.9 L463 306.8 L464 306.7 L465 306.6 L466 306.5 L467 306.4 L468 306.3 L469 306.2 L470 306.1 L471 306.0 L472 305.9 L473 305.8 L474 305.7 L475 305.6 L476 305.5 L477 305.4 L478 305.3 L479 305.2 L480 305.2 L481 305.1 L482 305.0 L483 304.9 L484 304.8 L485 304.7 L486 304.7 L487 304.6 L488 304.5 L489 304.5 L490 304.4 L491 304.3 L492 304.3 L493 304.2 L494 304.2 L495 304.1 L496 304.1 L497 304.1 L498 304.0 L499 304.0 L500 304.0 L501 304.0 L502 304.0 L503 304.0 L504 303.9 L505 304.0 L506 304.0 L507 304.0 L508 304.0 L509 304.0 L510 304.0 L511 304.1 L512 304.1 L513 304.2 L514 304.2 L515 304.3 L516 304.4 L517 304.4 L518 304.5 L519 304.6 L520 304.7 L521 304.8 L522 304.9 L523 305.0 L524 305.1 L525 305.3 L526 305.4 L527 305.6 L528 305.7 L529 305.9 L530 306.1 L531 306.2 L532 306.4 L533 306.6 L534 306.8 L535 307.1 L536 307.3 L537 307.5 L538 307.8 L539 308.0 L540 308.3 L541 308.6 L542 308.8 L543 309.1 L544 309.4 L545 309.8 L546 310.1 L547 310.4 L548 310.8 L549 311.1 L550 311.5 L551 311.9 L552 312.3 L553 312.7 L554 313.1 L555 313.5 L556 313.9 L557 314.4 L558 314.8 L559 315.3 L560 315.8 L561 316.3 L562 316.8 L563 317.3 L564 317.8 L565 318.4 L566 318.9 L567 319.5 L568 320.0 L569 320.6 L570 321.1 L571 321.7 L572 322.3 L573 322.8 L574 323.4 L575 324.0 L576 324.6 L577 325.2 L578 325.7 L579 326.3 L580 326.9 L581 327.5 L582 328.0 L583 328.6 L584 329.2 L585 329.7 L586 330.3 L587 330.8 L588 331.3 L589 331.9 L590 332.4 L591 332.9 L592 333.4 L593 333.9 L594 334.3 L595 334.8 L596 335.2 L597 335.7 L598 336.1 L599 336.5 L600 336.8 L601 337.2 L602 337.5 L603 337.9 L604 338.2 L605 338.4 L606 338.7 L607 338.9 L608 339.1 L609 339.3 L610 339.5 L611 339.6 L612 339.7 L613 339.8 L614 339.8 L615 339.8 L616 339.8 L617 339.8 L618 339.7 L619 339.6 L620 339.4 L621 339.2 L622 339.0 L623 338.7 L624 338.4 L625 338.1 L626 337.7 L627 337.3 L628 336.8 L629 336.3 L630 335.8 L631 335.2 L632 334.6 L633 334.0 L634 333.3 L635 332.6 L636 331.9 L637 331.1 L638 330.3 L639 329.4 L640 328.5 L641 327.6 L642 326.6 L643 325.6 L644 324.6 L645 323.5 L646 322.4 L647 321.3 L648 320.1 L649 318.9 L650 317.6 L651 316.3 L652 315.0 L653 313.7 L654 312.4 L655 311.0 L656 309.7 L657 308.3 L658 307.0 L659 305.6 L660 304.3 L661 302.9 L662 301.6 L663 300.3 L664 299.0 L665 297.8 L666 296.6 L667 295.4 L668 294.2 L669 293.1 L670 292.0 L671 290.9 L672 290.0 L673 289.0 L674 288.1 L675 287.3 L676 286.5 L677 285.8 L678 285.1 L679 284.5 L680 284.0 L681 283.5 L682 283.0 L683 282.7 L684 282.3 L685 282.0 L686 281.8 L687 281.6 L688 281.5 L689 281.4 L690 281.4 L691 281.4 L692 281.5 L693 281.6 L694 281.8 L695 282.0 L696 282.3 L697 282.7 L698 283.0 L699 283.5 L700 284.0 L701 284.6 L702 285.3 L703 286.0 L704 286.8 L705 287.6 L706 288.5 L707 289.5 L708 290.5 L709 291.6 L710 292.7 L711 293.9 L712 295.1 L713 296.4 L714 297.7 L715 299.0 L716 300.4 L717 301.8 L718 303.2 L719 304.7 L720 306.2 L721 307.7 L722 309.3 L723 310.8 L724 312.4 L725 313.9 L726 315.5 L727 317.0 L728 318.6 L729 320.1 L730 321.6 L731 323.0 L732 324.5 L733 325.8 L734 327.2 L735 328.5 L736 329.7 L737 330.9 L738 331.9 L739 333.0 L740 333.9 L741 334.7 L742 335.5 L743 336.1 L744 336.7 L745 337.1 L746 337.4 L747 337.5 L748 337.5 L749 337.4 L750 337.1 L751 336.6 L752 336.1 L753 335.4 L754 334.7 L755 333.8 L756 332.9 L757 331.9 L758 330.9 L759 329.8 L760 328.6 L761 327.4 L762 326.1 L763 324.9 L764 323.6 L765 322.2 L766 320.9 L767 319.6 L768 318.2 L769 316.8 L770 315.5 L771 314.2 L772 312.8 L773 311.5 L774 310.2 L775 309.0 L776 307.8 L777 306.6 L778 305.5 L779 304.4 L780 303.3 L781 302.3 L782 301.4 L783 300.5 L784 299.7 L785 299.0 L786 298.3 L787 297.8 L788 297.2 L789 296.8 L790 296.4 L791 296.1 L792 295.8 L793 295.6 L794 295.4 L795 295.3 L796 295.3 L797 295.2 L798 295.3 L799 295.4 L800 295.5 L801 295.7 L802 295.9 L803 296.2 L804 296.6 L805 297.0 L806 297.4 L807 297.9 L808 298.5 L809 299.1 L810 299.8 L811 300.5 L812 301.3 L813 302.1 L814 303.0 L815 303.9 L816 304.8 L817 305.8 L818 306.7 L819 307.7 L820 308.8 L821 309.8 L822 310.8 L823 311.8 L824 312.8 L825 313.8 L826 314.8 L827 315.8 L828 316.7 L829 317.6 L830 318.5 L831 319.3 L832 320.0 L833 320.7 L834 321.3 L835 321.8 L836 322.3 L837 322.7 L838 323.0 L839 323.3 L840 323.4 L841 323.5 L842 323.4 L843 323.3 L844 323.1 L845 322.8 L846 322.5 L847 322.1 L848 321.7 L849 321.2 L850 320.7 L851 320.2 L852 319.7 L853 319.1 L854 318.5 L855 318.0 L856 317.4 L857 316.8 L858 316.2 L859 315.6 L860 315.1 L861 314.5 L862 314.0 L863 313.4 L864 312.9 L865 312.4 L866 311.9 L867 311.4 L868 310.9 L869 310.4 L870 309.9 L871 309.5 L872 309.1 L873 308.7 L874 308.3 L875 308.0 L876 307.6 L877 307.3 L878 307.0 L879 306.7 L880 306.5 L881 306.3 L882 306.1 L883 305.9 L884 305.8 L885 305.7 L886 305.6 L887 305.5 L888 305.5 L889 305.5 L890 305.6 L891 305.6 L892 305.8 L893 305.9 L894 306.1 L895 306.3 L896 306.5 L897 306.8 L898 307.1 L899 307.5 L900 307.9 L901 308.3 L902 308.8 L903 309.3 L904 309.9 L905 310.5 L906 311.2 L907 311.9 L908 312.6 L909 313.4 L910 314.3 L911 315.2 L912 316.2 L913 317.2 L914 318.3 L914 337.9 L913 336.4 L912 334.9 L911 333.5 L910 332.2 L909 331.0 L908 329.8 L907 328.8 L906 327.7 L905 326.8 L904 325.9 L903 325.0 L902 324.3 L901 323.6 L900 322.9 L899 322.4 L898 321.8 L897 321.4 L896 321.0 L895 320.6 L894 320.3 L893 320.1 L892 319.9 L891 319.7 L890 319.6 L889 319.5 L888 319.5 L887 319.5 L886 319.6 L885 319.7 L884 319.9 L883 320.0 L882 320.3 L881 320.5 L880 320.8 L879 321.1 L878 321.4 L877 321.8 L876 322.1 L875 322.5 L874 323.0 L873 323.4 L872 323.9 L871 324.3 L870 324.8 L869 325.3 L868 325.9 L867 326.4 L866 326.9 L865 327.5 L864 328.1 L863 328.6 L862 329.2 L861 329.8 L860 330.3 L859 330.9 L858 331.5 L857 332.1 L856 332.6 L855 333.2 L854 333.7 L853 334.2 L852 334.7 L851 335.2 L850 335.6 L849 336.0 L848 336.3 L847 336.6 L846 336.9 L845 337.1 L844 337.2 L843 337.4 L842 337.4 L841 337.5 L840 337.4 L839 337.4 L838 337.2 L837 337.1 L836 336.8 L835 336.5 L834 336.2 L833 335.8 L832 335.4 L831 334.9 L830 334.3 L829 333.7 L828 333.1 L827 332.3 L826 331.6 L825 330.8 L824 329.9 L823 329.1 L822 328.1 L821 327.2 L820 326.2 L819 325.2 L818 324.2 L817 323.2 L816 322.2 L815 321.2 L814 320.1 L813 319.1 L812 318.1 L811 317.2 L810 316.2 L809 315.3 L808 314.5 L807 313.6 L806 312.9 L805 312.1 L804 311.5 L803 310.9 L802 310.5 L801 310.0 L800 309.7 L799 309.5 L798 309.3 L797 309.2 L796 309.3 L795 309.4 L794 309.6 L793 309.9 L792 310.3 L791 310.8 L790 311.4 L789 312.1 L788 312.9 L787 313.8 L786 314.8 L785 315.8 L784 316.9 L783 318.0 L782 319.2 L781 320.4 L780 321.7 L779 323.0 L778 324.3 L777 325.6 L776 327.0 L775 328.3 L774 329.7 L773 331.0 L772 332.4 L771 333.7 L770 335.0 L769 336.3 L768 337.6 L767 338.8 L766 340.0 L765 341.2 L764 342.3 L763 343.4 L762 344.4 L761 345.3 L760 346.2 L759 347.1 L758 347.8 L757 348.5 L756 349.1 L755 349.7 L754 350.2 L753 350.6 L752 350.9 L751 351.2 L750 351.3 L749 351.5 L748 351.5 L747 351.5 L746 351.5 L745 351.3 L744 351.2 L743 350.9 L742 350.6 L741 350.2 L740 349.7 L739 349.2 L738 348.6 L737 347.9 L736 347.1 L735 346.3 L734 345.4 L733 344.4 L732 343.4 L731 342.3 L730 341.2 L729 339.9 L728 338.7 L727 337.4 L726 336.0 L725 334.6 L724 333.2 L723 331.7 L722 330.2 L721 328.7 L720 327.1 L719 325.6 L718 324.0 L717 322.5 L716 320.9 L715 319.4 L714 317.9 L713 316.3 L712 314.9 L711 313.4 L710 312.0 L709 310.6 L708 309.2 L707 307.9 L706 306.6 L705 305.4 L704 304.2 L703 303.0 L702 302.0 L701 301.0 L700 300.0 L699 299.2 L698 298.4 L697 297.7 L696 297.1 L695 296.6 L694 296.1 L693 295.8 L692 295.6 L691 295.5 L690 295.4 L689 295.5 L688 295.6 L687 295.8 L686 296.1 L685 296.5 L684 297.0 L683 297.5 L682 298.2 L681 298.9 L680 299.7 L679 300.5 L678 301.4 L677 302.4 L676 303.4 L675 304.5 L674 305.6 L673 306.8 L672 308.0 L671 309.3 L670 310.5 L669 311.8 L668 313.1 L667 314.4 L666 315.8 L665 317.1 L664 318.5 L663 319.8 L662 321.2 L661 322.6 L660 323.9 L659 325.2 L658 326.5 L657 327.8 L656 329.1 L655 330.4 L654 331.6 L653 332.8 L652 333.9 L651 335.0 L650 336.1 L649 337.1 L648 338.1 L647 339.1 L646 340.0 L645 341.0 L644 341.8 L643 342.7 L642 343.5 L641 344.2 L640 345.0 L639 345.7 L638 346.4 L637 347.0 L636 347.7 L635 348.2 L634 348.8 L633 349.3 L632 349.8 L631 350.3 L630 350.7 L629 351.1 L628 351.5 L627 351.9 L626 352.2 L625 352.5 L624 352.7 L623 353.0 L622 353.2 L621 353.3 L620 353.5 L619 353.6 L618 353.7 L617 353.8 L616 353.8 L615 353.8 L614 353.8 L613 353.8 L612 353.7 L611 353.7 L610 353.5 L609 353.4 L608 353.3 L607 353.1 L606 352.9 L605 352.7 L604 352.5 L603 352.2 L602 351.9 L601 351.6 L600 351.3 L599 351.0 L598 350.6 L597 350.3 L596 349.9 L595 349.5 L594 349.1 L593 348.7 L592 348.2 L591 347.8 L590 347.3 L589 346.9 L588 346.4 L587 345.9 L586 345.4 L585 344.8 L584 344.3 L583 343.8 L582 343.2 L581 342.7 L580 342.1 L579 341.6 L578 341.0 L577 340.4 L576 339.9 L575 339.3 L574 338.7 L573 338.1 L572 337.6 L571 337.0 L570 336.4 L569 335.8 L568 335.3 L567 334.7 L566 334.1 L565 333.6 L564 333.0 L563 332.4 L562 331.9 L561 331.4 L560 330.8 L559 330.3 L558 329.8 L557 329.3 L556 328.8 L555 328.3 L554 327.8 L553 327.4 L552 326.9 L551 326.5 L550 326.1 L549 325.7 L548 325.3 L547 324.9 L546 324.6 L545 324.2 L544 323.9 L543 323.5 L542 323.2 L541 322.9 L540 322.6 L539 322.3 L538 322.0 L537 321.8 L536 321.5 L535 321.3 L534 321.0 L533 320.8 L532 320.6 L531 320.4 L530 320.2 L529 320.0 L528 319.8 L527 319.7 L526 319.5 L525 319.4 L524 319.2 L523 319.1 L522 319.0 L521 318.8 L520 318.7 L519 318.6 L518 318.5 L517 318.5 L516 318.4 L515 318.3 L514 318.2 L513 318.2 L512 318.1 L511 318.1 L510 318.0 L509 318.0 L508 318.0 L507 318.0 L506 318.0 L505 318.0 L504 317.9 L503 318.0 L502 318.0 L501 318.0 L500 318.0 L499 318.0 L498 318.0 L497 318.1 L496 318.1 L495 318.2 L494 318.2 L493 318.3 L492 318.3 L491 318.4 L490 318.4 L489 318.5 L488 318.6 L487 318.6 L486 318.7 L485 318.8 L484 318.8 L483 318.9 L482 319.0 L481 319.1 L480 319.2 L479 319.3 L478 319.4 L477 319.5 L476 319.6 L475 319.6 L474 319.7 L473 319.8 L472 319.9 L471 320.0 L470 320.1 L469 320.2 L468 320.3 L467 320.4 L466 320.5 L465 320.6 L464 320.7 L463 320.8 L462 320.9 L461 321.0 L460 321.1 L459 321.2 L458 321.3 L457 321.4 L456 321.5 L455 321.6 L454 321.7 L453 321.8 L452 321.9 L451 322.0 L450 322.1 L449 322.1 L448 322.2 L447 322.3 L446 322.4 L445 322.4 L444 322.5 L443 322.6 L442 322.6 L441 322.7 L440 322.7 Z" fill="#2a4fc0"/>
<path d="M440 309.4 L441 309.4 L442 309.3 L443 309.2 L444 309.2 L445 309.1 L446 309.0 L447 309.0 L448 308.9 L449 308.8 L450 308.7 L451 308.6 L452 308.6 L453 308.5 L454 308.4 L455 308.3 L456 308.2 L457 308.1 L458 308.0 L459 307.9 L460 307.8 L461 307.7 L462 307.6 L463 307.5 L464 307.4 L465 307.3 L466 307.2 L467 307.1 L468 307.0 L469 306.9 L470 306.8 L471 306.7 L472 306.6 L473 306.5 L474 306.4 L475 306.3 L476 306.2 L477 306.1 L478 306.0 L479 305.9 L480 305.9 L481 305.8 L482 305.7 L483 305.6 L484 305.5 L485 305.4 L486 305.4 L487 305.3 L488 305.2 L489 305.2 L490 305.1 L491 305.0 L492 305.0 L493 304.9 L494 304.9 L495 304.8 L496 304.8 L497 304.8 L498 304.7 L499 304.7 L500 304.7 L501 304.7 L502 304.7 L503 304.7 L504 304.6 L505 304.7 L506 304.7 L507 304.7 L508 304.7 L509 304.7 L510 304.7 L511 304.8 L512 304.8 L513 304.9 L514 304.9 L515 305.0 L516 305.1 L517 305.1 L518 305.2 L519 305.3 L520 305.4 L521 305.5 L522 305.6 L523 305.7 L524 305.9 L525 306.0 L526 306.1 L527 306.3 L528 306.4 L529 306.6 L530 306.8 L531 307.0 L532 307.1 L533 307.3 L534 307.6 L535 307.8 L536 308.0 L537 308.2 L538 308.5 L539 308.7 L540 309.0 L541 309.3 L542 309.6 L543 309.9 L544 310.2 L545 310.5 L546 310.8 L547 311.1 L548 311.5 L549 311.8 L550 312.2 L551 312.6 L552 313.0 L553 313.4 L554 313.8 L555 314.2 L556 314.7 L557 315.1 L558 315.6 L559 316.1 L560 316.5 L561 317.0 L562 317.6 L563 318.1 L564 318.6 L565 319.1 L566 319.7 L567 320.2 L568 320.8 L569 321.3 L570 321.9 L571 322.5 L572 323.0 L573 323.6 L574 324.2 L575 324.8 L576 325.3 L577 325.9 L578 326.5 L579 327.1 L580 327.7 L581 328.2 L582 328.8 L583 329.4 L584 329.9 L585 330.5 L586 331.0 L587 331.6 L588 332.1 L589 332.6 L590 333.1 L591 333.6 L592 334.1 L593 334.6 L594 335.1 L595 335.5 L596 336.0 L597 336.4 L598 336.8 L599 337.2 L600 337.6 L601 337.9 L602 338.3 L603 338.6 L604 338.9 L605 339.2 L606 339.4 L607 339.6 L608 339.8 L609 340.0 L610 340.2 L611 340.3 L612 340.4 L613 340.5 L614 340.5 L615 340.5 L616 340.5 L617 340.5 L618 340.4 L619 340.3 L620 340.1 L621 339.9 L622 339.7 L623 339.4 L624 339.1 L625 338.8 L626 338.4 L627 338.0 L628 337.5 L629 337.1 L630 336.5 L631 336.0 L632 335.4 L633 334.8 L634 334.1 L635 333.4 L636 332.7 L637 331.9 L638 331.1 L639 330.2 L640 329.4 L641 328.4 L642 327.5 L643 326.5 L644 325.5 L645 324.4 L646 323.3 L647 322.2 L648 321.0 L649 319.8 L650 318.5 L651 317.3 L652 316.0 L653 314.7 L654 313.3 L655 312.0 L656 310.6 L657 309.3 L658 307.9 L659 306.6 L660 305.2 L661 303.9 L662 302.6 L663 301.3 L664 300.0 L665 298.7 L666 297.5 L667 296.3 L668 295.1 L669 294.0 L670 292.9 L671 291.9 L672 290.9 L673 289.9 L674 289.0 L675 288.1 L676 287.3 L677 286.6 L678 285.9 L679 285.3 L680 284.8 L681 284.2 L682 283.8 L683 283.4 L684 283.1 L685 282.8 L686 282.5 L687 282.4 L688 282.2 L689 282.1 L690 282.1 L691 282.1 L692 282.2 L693 282.3 L694 282.5 L695 282.8 L696 283.1 L697 283.4 L698 283.8 L699 284.3 L700 284.8 L701 285.4 L702 286.1 L703 286.8 L704 287.6 L705 288.5 L706 289.4 L707 290.4 L708 291.4 L709 292.5 L710 293.7 L711 294.8 L712 296.1 L713 297.4 L714 298.7 L715 300.0 L716 301.4 L717 302.8 L718 304.3 L719 305.8 L720 307.3 L721 308.8 L722 310.3 L723 311.9 L724 313.4 L725 315.0 L726 316.5 L727 318.0 L728 319.6 L729 321.1 L730 322.5 L731 324.0 L732 325.4 L733 326.8 L734 328.1 L735 329.4 L736 330.6 L737 331.7 L738 332.8 L739 333.8 L740 334.7 L741 335.5 L742 336.2 L743 336.9 L744 337.4 L745 337.8 L746 338.1 L747 338.2 L748 338.2 L749 338.1 L750 337.8 L751 337.4 L752 336.8 L753 336.2 L754 335.5 L755 334.6 L756 333.7 L757 332.8 L758 331.7 L759 330.6 L760 329.5 L761 328.3 L762 327.1 L763 325.8 L764 324.5 L765 323.2 L766 321.9 L767 320.5 L768 319.2 L769 317.8 L770 316.5 L771 315.1 L772 313.8 L773 312.5 L774 311.2 L775 310.0 L776 308.7 L777 307.5 L778 306.4 L779 305.3 L780 304.2 L781 303.2 L782 302.3 L783 301.4 L784 300.6 L785 299.8 L786 299.2 L787 298.6 L788 298.0 L789 297.6 L790 297.2 L791 296.8 L792 296.5 L793 296.3 L794 296.1 L795 296.0 L796 296.0 L797 295.9 L798 296.0 L799 296.1 L800 296.2 L801 296.4 L802 296.7 L803 297.0 L804 297.3 L805 297.7 L806 298.2 L807 298.7 L808 299.3 L809 299.9 L810 300.6 L811 301.4 L812 302.1 L813 303.0 L814 303.8 L815 304.7 L816 305.7 L817 306.6 L818 307.6 L819 308.6 L820 309.6 L821 310.6 L822 311.7 L823 312.7 L824 313.7 L825 314.7 L826 315.7 L827 316.6 L828 317.5 L829 318.4 L830 319.2 L831 320.0 L832 320.8 L833 321.4 L834 322.0 L835 322.6 L836 323.0 L837 323.4 L838 323.8 L839 324.0 L840 324.1 L841 324.2 L842 324.1 L843 324.0 L844 323.8 L845 323.5 L846 323.2 L847 322.9 L848 322.4 L849 322.0 L850 321.5 L851 321.0 L852 320.4 L853 319.9 L854 319.3 L855 318.7 L856 318.1 L857 317.6 L858 317.0 L859 316.4 L860 315.8 L861 315.3 L862 314.7 L863 314.2 L864 313.6 L865 313.1 L866 312.6 L867 312.1 L868 311.6 L869 311.1 L870 310.7 L871 310.3 L872 309.8 L873 309.4 L874 309.0 L875 308.7 L876 308.3 L877 308.0 L878 307.7 L879 307.5 L880 307.2 L881 307.0 L882 306.8 L883 306.6 L884 306.5 L885 306.4 L886 306.3 L887 306.2 L888 306.2 L889 306.2 L890 306.3 L891 306.4 L892 306.5 L893 306.6 L894 306.8 L895 307.0 L896 307.3 L897 307.5 L898 307.9 L899 308.2 L900 308.6 L901 309.1 L902 309.6 L903 310.1 L904 310.7 L905 311.3 L906 312.0 L907 312.7 L908 313.5 L909 314.3 L910 315.2 L911 316.1 L912 317.1 L913 318.2 L914 319.3 L914 336.9 L913 335.4 L912 334.0 L911 332.6 L910 331.3 L909 330.1 L908 329.0 L907 327.9 L906 326.9 L905 326.0 L904 325.1 L903 324.3 L902 323.5 L901 322.8 L900 322.2 L899 321.6 L898 321.1 L897 320.6 L896 320.2 L895 319.9 L894 319.6 L893 319.3 L892 319.1 L891 319.0 L890 318.9 L889 318.8 L888 318.8 L887 318.8 L886 318.9 L885 319.0 L884 319.2 L883 319.3 L882 319.5 L881 319.8 L880 320.1 L879 320.4 L878 320.7 L877 321.0 L876 321.4 L875 321.8 L874 322.2 L873 322.7 L872 323.1 L871 323.6 L870 324.1 L869 324.6 L868 325.1 L867 325.6 L866 326.2 L865 326.7 L864 327.3 L863 327.9 L862 328.4 L861 329.0 L860 329.6 L859 330.2 L858 330.7 L857 331.3 L856 331.9 L855 332.4 L854 333.0 L853 333.5 L852 334.0 L851 334.4 L850 334.8 L849 335.2 L848 335.6 L847 335.9 L846 336.1 L845 336.4 L844 336.5 L843 336.7 L842 336.7 L841 336.8 L840 336.7 L839 336.7 L838 336.5 L837 336.3 L836 336.1 L835 335.8 L834 335.5 L833 335.0 L832 334.6 L831 334.1 L830 333.5 L829 332.9 L828 332.2 L827 331.5 L826 330.7 L825 329.9 L824 329.1 L823 328.2 L822 327.3 L821 326.3 L820 325.3 L819 324.4 L818 323.4 L817 322.3 L816 321.3 L815 320.3 L814 319.3 L813 318.3 L812 317.3 L811 316.3 L810 315.4 L809 314.5 L808 313.7 L807 312.8 L806 312.1 L805 311.4 L804 310.8 L803 310.2 L802 309.7 L801 309.3 L800 309.0 L799 308.8 L798 308.6 L797 308.5 L796 308.6 L795 308.7 L794 308.9 L793 309.2 L792 309.6 L791 310.1 L790 310.7 L789 311.4 L788 312.1 L787 313.0 L786 313.9 L785 314.9 L784 316.0 L783 317.1 L782 318.3 L781 319.5 L780 320.8 L779 322.1 L778 323.4 L777 324.7 L776 326.0 L775 327.4 L774 328.7 L773 330.1 L772 331.4 L771 332.7 L770 334.1 L769 335.4 L768 336.6 L767 337.9 L766 339.1 L765 340.2 L764 341.4 L763 342.4 L762 343.5 L761 344.4 L760 345.3 L759 346.2 L758 347.0 L757 347.7 L756 348.3 L755 348.9 L754 349.4 L753 349.8 L752 350.2 L751 350.4 L750 350.6 L749 350.8 L748 350.8 L747 350.8 L746 350.8 L745 350.6 L744 350.4 L743 350.2 L742 349.8 L741 349.4 L740 348.9 L739 348.4 L738 347.7 L737 347.0 L736 346.3 L735 345.4 L734 344.5 L733 343.5 L732 342.5 L731 341.4 L730 340.2 L729 338.9 L728 337.7 L727 336.3 L726 335.0 L725 333.6 L724 332.1 L723 330.6 L722 329.1 L721 327.6 L720 326.1 L719 324.5 L718 323.0 L717 321.4 L716 319.9 L715 318.4 L714 316.8 L713 315.3 L712 313.9 L711 312.4 L710 311.0 L709 309.6 L708 308.3 L707 307.0 L706 305.7 L705 304.5 L704 303.3 L703 302.2 L702 301.1 L701 300.1 L700 299.2 L699 298.4 L698 297.6 L697 296.9 L696 296.3 L695 295.8 L694 295.4 L693 295.1 L692 294.9 L691 294.8 L690 294.7 L689 294.8 L688 294.9 L687 295.1 L686 295.4 L685 295.8 L684 296.3 L683 296.8 L682 297.4 L681 298.1 L680 298.9 L679 299.7 L678 300.6 L677 301.6 L676 302.6 L675 303.7 L674 304.8 L673 305.9 L672 307.1 L671 308.3 L670 309.6 L669 310.9 L668 312.2 L667 313.5 L666 314.8 L665 316.2 L664 317.5 L663 318.9 L662 320.2 L661 321.6 L660 322.9 L659 324.2 L658 325.6 L657 326.9 L656 328.1 L655 329.4 L654 330.6 L653 331.8 L652 333.0 L651 334.1 L650 335.2 L649 336.2 L648 337.2 L647 338.2 L646 339.2 L645 340.1 L644 341.0 L643 341.8 L642 342.6 L641 343.4 L640 344.2 L639 344.9 L638 345.6 L637 346.2 L636 346.9 L635 347.5 L634 348.0 L633 348.6 L632 349.1 L631 349.5 L630 350.0 L629 350.4 L628 350.8 L627 351.1 L626 351.5 L625 351.8 L624 352.0 L623 352.3 L622 352.5 L621 352.6 L620 352.8 L619 352.9 L618 353.0 L617 353.1 L616 353.1 L615 353.1 L614 353.1 L613 353.1 L612 353.0 L611 352.9 L610 352.8 L609 352.7 L608 352.6 L607 352.4 L606 352.2 L605 352.0 L604 351.7 L603 351.5 L602 351.2 L601 350.9 L600 350.6 L599 350.3 L598 349.9 L597 349.6 L596 349.2 L595 348.8 L594 348.4 L593 347.9 L592 347.5 L591 347.0 L590 346.6 L589 346.1 L588 345.6 L587 345.1 L586 344.6 L585 344.1 L584 343.6 L583 343.0 L582 342.5 L581 341.9 L580 341.4 L579 340.8 L578 340.3 L577 339.7 L576 339.1 L575 338.5 L574 338.0 L573 337.4 L572 336.8 L571 336.2 L570 335.6 L569 335.1 L568 334.5 L567 333.9 L566 333.4 L565 332.8 L564 332.2 L563 331.7 L562 331.1 L561 330.6 L560 330.1 L559 329.5 L558 329.0 L557 328.5 L556 328.0 L555 327.6 L554 327.1 L553 326.7 L552 326.2 L551 325.8 L550 325.4 L549 325.0 L548 324.6 L547 324.2 L546 323.8 L545 323.5 L544 323.1 L543 322.8 L542 322.5 L541 322.2 L540 321.9 L539 321.6 L538 321.3 L537 321.1 L536 320.8 L535 320.6 L534 320.3 L533 320.1 L532 319.9 L531 319.7 L530 319.5 L529 319.3 L528 319.1 L527 319.0 L526 318.8 L525 318.7 L524 318.5 L523 318.4 L522 318.3 L521 318.1 L520 318.0 L519 317.9 L518 317.8 L517 317.8 L516 317.7 L515 317.6 L514 317.5 L513 317.5 L512 317.4 L511 317.4 L510 317.3 L509 317.3 L508 317.3 L507 317.3 L506 317.3 L505 317.3 L504 317.2 L503 317.3 L502 317.3 L501 317.3 L500 317.3 L499 317.3 L498 317.3 L497 317.4 L496 317.4 L495 317.5 L494 317.5 L493 317.6 L492 317.6 L491 317.7 L490 317.7 L489 317.8 L488 317.9 L487 317.9 L486 318.0 L485 318.1 L484 318.1 L483 318.2 L482 318.3 L481 318.4 L480 318.5 L479 318.6 L478 318.7 L477 318.8 L476 318.8 L475 318.9 L474 319.0 L473 319.1 L472 319.2 L471 319.3 L470 319.4 L469 319.5 L468 319.6 L467 319.7 L466 319.8 L465 319.9 L464 320.0 L463 320.1 L462 320.2 L461 320.3 L460 320.4 L459 320.5 L458 320.6 L457 320.7 L456 320.8 L455 320.9 L454 321.0 L453 321.1 L452 321.2 L451 321.3 L450 321.4 L449 321.4 L448 321.5 L447 321.6 L446 321.7 L445 321.7 L444 321.8 L443 321.9 L442 321.9 L441 322.0 L440 322.0 Z" fill="#1a80d2"/>
<path d="M440 310.1 L441 310.1 L442 310.0 L443 309.9 L444 309.9 L445 309.8 L446 309.7 L447 309.7 L448 309.6 L449 309.5 L450 309.4 L451 309.3 L452 309.3 L453 309.2 L454 309.1 L455 309.0 L456 308.9 L457 308.8 L458 308.7 L459 308.6 L460 308.5 L461 308.4 L462 308.3 L463 308.2 L464 308.1 L465 308.0 L466 307.9 L467 307.8 L468 307.7 L469 307.6 L470 307.5 L471 307.4 L472 307.3 L473 307.2 L474 307.1 L475 307.0 L476 306.9 L477 306.8 L478 306.7 L479 306.6 L480 306.6 L481 306.5 L482 306.4 L483 306.3 L484 306.2 L485 306.1 L486 306.1 L487 306.0 L488 305.9 L489 305.9 L490 305.8 L491 305.7 L492 305.7 L493 305.6 L494 305.6 L495 305.5 L496 305.5 L497 305.5 L498 305.4 L499 305.4 L500 305.4 L501 305.4 L502 305.4 L503 305.4 L504 305.3 L505 305.4 L506 305.4 L507 305.4 L508 305.4 L509 305.4 L510 305.4 L511 305.5 L512 305.5 L513 305.6 L514 305.6 L515 305.7 L516 305.8 L517 305.8 L518 305.9 L519 306.0 L520 306.1 L521 306.2 L522 306.3 L523 306.4 L524 306.6 L525 306.7 L526 306.8 L527 307.0 L528 307.1 L529 307.3 L530 307.5 L531 307.7 L532 307.9 L533 308.1 L534 308.3 L535 308.5 L536 308.7 L537 308.9 L538 309.2 L539 309.5 L540 309.7 L541 310.0 L542 310.3 L543 310.6 L544 310.9 L545 311.2 L546 311.5 L547 311.9 L548 312.2 L549 312.6 L550 312.9 L551 313.3 L552 313.7 L553 314.1 L554 314.5 L555 315.0 L556 315.4 L557 315.9 L558 316.3 L559 316.8 L560 317.3 L561 317.8 L562 318.3 L563 318.8 L564 319.4 L565 319.9 L566 320.4 L567 321.0 L568 321.5 L569 322.1 L570 322.7 L571 323.2 L572 323.8 L573 324.4 L574 325.0 L575 325.5 L576 326.1 L577 326.7 L578 327.3 L579 327.8 L580 328.4 L581 329.0 L582 329.6 L583 330.1 L584 330.7 L585 331.2 L586 331.8 L587 332.3 L588 332.8 L589 333.4 L590 333.9 L591 334.4 L592 334.9 L593 335.3 L594 335.8 L595 336.3 L596 336.7 L597 337.1 L598 337.5 L599 337.9 L600 338.3 L601 338.6 L602 339.0 L603 339.3 L604 339.6 L605 339.9 L606 340.1 L607 340.3 L608 340.5 L609 340.7 L610 340.9 L611 341.0 L612 341.1 L613 341.2 L614 341.2 L615 341.2 L616 341.2 L617 341.2 L618 341.1 L619 341.0 L620 340.8 L621 340.6 L622 340.4 L623 340.1 L624 339.8 L625 339.5 L626 339.1 L627 338.7 L628 338.3 L629 337.8 L630 337.3 L631 336.7 L632 336.2 L633 335.5 L634 334.9 L635 334.2 L636 333.5 L637 332.7 L638 331.9 L639 331.1 L640 330.2 L641 329.3 L642 328.3 L643 327.3 L644 326.3 L645 325.3 L646 324.2 L647 323.1 L648 321.9 L649 320.7 L650 319.5 L651 318.2 L652 316.9 L653 315.6 L654 314.3 L655 313.0 L656 311.6 L657 310.3 L658 308.9 L659 307.6 L660 306.2 L661 304.9 L662 303.6 L663 302.3 L664 301.0 L665 299.7 L666 298.5 L667 297.3 L668 296.1 L669 294.9 L670 293.8 L671 292.8 L672 291.8 L673 290.8 L674 289.9 L675 289.0 L676 288.2 L677 287.4 L678 286.7 L679 286.1 L680 285.5 L681 285.0 L682 284.6 L683 284.1 L684 283.8 L685 283.5 L686 283.2 L687 283.1 L688 282.9 L689 282.8 L690 282.8 L691 282.8 L692 282.9 L693 283.1 L694 283.2 L695 283.5 L696 283.8 L697 284.2 L698 284.6 L699 285.1 L700 285.6 L701 286.3 L702 286.9 L703 287.7 L704 288.5 L705 289.4 L706 290.3 L707 291.3 L708 292.4 L709 293.5 L710 294.6 L711 295.8 L712 297.1 L713 298.4 L714 299.7 L715 301.0 L716 302.4 L717 303.9 L718 305.3 L719 306.8 L720 308.3 L721 309.8 L722 311.4 L723 312.9 L724 314.5 L725 316.0 L726 317.5 L727 319.1 L728 320.6 L729 322.1 L730 323.5 L731 325.0 L732 326.3 L733 327.7 L734 329.0 L735 330.3 L736 331.4 L737 332.6 L738 333.6 L739 334.6 L740 335.5 L741 336.3 L742 337.0 L743 337.6 L744 338.1 L745 338.5 L746 338.8 L747 338.9 L748 338.9 L749 338.8 L750 338.5 L751 338.1 L752 337.6 L753 337.0 L754 336.2 L755 335.4 L756 334.5 L757 333.6 L758 332.6 L759 331.5 L760 330.4 L761 329.2 L762 328.0 L763 326.7 L764 325.4 L765 324.1 L766 322.8 L767 321.5 L768 320.1 L769 318.8 L770 317.4 L771 316.1 L772 314.8 L773 313.5 L774 312.2 L775 310.9 L776 309.7 L777 308.5 L778 307.3 L779 306.2 L780 305.2 L781 304.1 L782 303.2 L783 302.3 L784 301.5 L785 300.7 L786 300.0 L787 299.4 L788 298.8 L789 298.3 L790 297.9 L791 297.6 L792 297.3 L793 297.0 L794 296.9 L795 296.7 L796 296.7 L797 296.6 L798 296.7 L799 296.8 L800 296.9 L801 297.1 L802 297.4 L803 297.7 L804 298.1 L805 298.5 L806 299.0 L807 299.5 L808 300.1 L809 300.7 L810 301.4 L811 302.2 L812 303.0 L813 303.8 L814 304.7 L815 305.6 L816 306.5 L817 307.5 L818 308.5 L819 309.5 L820 310.5 L821 311.5 L822 312.5 L823 313.5 L824 314.5 L825 315.5 L826 316.5 L827 317.4 L828 318.3 L829 319.2 L830 320.0 L831 320.8 L832 321.5 L833 322.2 L834 322.8 L835 323.3 L836 323.8 L837 324.2 L838 324.5 L839 324.7 L840 324.8 L841 324.9 L842 324.8 L843 324.7 L844 324.5 L845 324.3 L846 323.9 L847 323.6 L848 323.2 L849 322.7 L850 322.2 L851 321.7 L852 321.2 L853 320.6 L854 320.1 L855 319.5 L856 318.9 L857 318.3 L858 317.7 L859 317.2 L860 316.6 L861 316.0 L862 315.5 L863 314.9 L864 314.4 L865 313.9 L866 313.4 L867 312.9 L868 312.4 L869 311.9 L870 311.4 L871 311.0 L872 310.6 L873 310.2 L874 309.8 L875 309.4 L876 309.1 L877 308.7 L878 308.4 L879 308.2 L880 307.9 L881 307.7 L882 307.5 L883 307.3 L884 307.2 L885 307.1 L886 307.0 L887 306.9 L888 306.9 L889 306.9 L890 307.0 L891 307.1 L892 307.2 L893 307.3 L894 307.5 L895 307.7 L896 308.0 L897 308.3 L898 308.6 L899 309.0 L900 309.4 L901 309.9 L902 310.4 L903 310.9 L904 311.5 L905 312.1 L906 312.8 L907 313.6 L908 314.4 L909 315.2 L910 316.1 L911 317.0 L912 318.1 L913 319.1 L914 320.2 L914 335.9 L913 334.5 L912 333.0 L911 331.7 L910 330.4 L909 329.3 L908 328.1 L907 327.1 L906 326.1 L905 325.1 L904 324.3 L903 323.5 L902 322.7 L901 322.1 L900 321.4 L899 320.9 L898 320.4 L897 319.9 L896 319.5 L895 319.2 L894 318.9 L893 318.6 L892 318.4 L891 318.3 L890 318.2 L889 318.1 L888 318.1 L887 318.1 L886 318.2 L885 318.3 L884 318.5 L883 318.6 L882 318.8 L881 319.1 L880 319.3 L879 319.6 L878 320.0 L877 320.3 L876 320.7 L875 321.1 L874 321.5 L873 321.9 L872 322.4 L871 322.9 L870 323.4 L869 323.9 L868 324.4 L867 324.9 L866 325.4 L865 326.0 L864 326.5 L863 327.1 L862 327.7 L861 328.2 L860 328.8 L859 329.4 L858 330.0 L857 330.6 L856 331.1 L855 331.7 L854 332.2 L853 332.7 L852 333.2 L851 333.7 L850 334.1 L849 334.5 L848 334.8 L847 335.2 L846 335.4 L845 335.7 L844 335.8 L843 336.0 L842 336.0 L841 336.1 L840 336.0 L839 336.0 L838 335.8 L837 335.6 L836 335.4 L835 335.1 L834 334.7 L833 334.3 L832 333.8 L831 333.3 L830 332.7 L829 332.1 L828 331.4 L827 330.7 L826 329.9 L825 329.1 L824 328.2 L823 327.3 L822 326.4 L821 325.5 L820 324.5 L819 323.5 L818 322.5 L817 321.5 L816 320.5 L815 319.4 L814 318.4 L813 317.4 L812 316.5 L811 315.5 L810 314.6 L809 313.7 L808 312.9 L807 312.1 L806 311.3 L805 310.6 L804 310.0 L803 309.5 L802 309.0 L801 308.6 L800 308.3 L799 308.1 L798 307.9 L797 307.8 L796 307.9 L795 308.0 L794 308.2 L793 308.5 L792 308.9 L791 309.3 L790 309.9 L789 310.6 L788 311.3 L787 312.2 L786 313.1 L785 314.1 L784 315.2 L783 316.3 L782 317.4 L781 318.6 L780 319.9 L779 321.1 L778 322.4 L777 323.7 L776 325.1 L775 326.4 L774 327.7 L773 329.1 L772 330.4 L771 331.8 L770 333.1 L769 334.4 L768 335.7 L767 336.9 L766 338.1 L765 339.3 L764 340.4 L763 341.5 L762 342.6 L761 343.5 L760 344.5 L759 345.3 L758 346.1 L757 346.9 L756 347.5 L755 348.1 L754 348.6 L753 349.1 L752 349.4 L751 349.7 L750 349.9 L749 350.1 L748 350.1 L747 350.1 L746 350.1 L745 349.9 L744 349.7 L743 349.4 L742 349.1 L741 348.6 L740 348.1 L739 347.6 L738 346.9 L737 346.2 L736 345.4 L735 344.5 L734 343.6 L733 342.6 L732 341.5 L731 340.4 L730 339.2 L729 338.0 L728 336.7 L727 335.3 L726 333.9 L725 332.5 L724 331.1 L723 329.6 L722 328.1 L721 326.6 L720 325.0 L719 323.5 L718 322.0 L717 320.4 L716 318.9 L715 317.3 L714 315.8 L713 314.3 L712 312.9 L711 311.4 L710 310.0 L709 308.7 L708 307.3 L707 306.0 L706 304.8 L705 303.6 L704 302.4 L703 301.3 L702 300.3 L701 299.3 L700 298.4 L699 297.6 L698 296.8 L697 296.2 L696 295.6 L695 295.1 L694 294.7 L693 294.4 L692 294.2 L691 294.1 L690 294.0 L689 294.1 L688 294.2 L687 294.4 L686 294.7 L685 295.1 L684 295.5 L683 296.1 L682 296.7 L681 297.3 L680 298.1 L679 298.9 L678 299.8 L677 300.7 L676 301.7 L675 302.8 L674 303.9 L673 305.0 L672 306.2 L671 307.4 L670 308.7 L669 309.9 L668 311.2 L667 312.5 L666 313.9 L665 315.2 L664 316.5 L663 317.9 L662 319.2 L661 320.6 L660 321.9 L659 323.3 L658 324.6 L657 325.9 L656 327.2 L655 328.4 L654 329.7 L653 330.9 L652 332.0 L651 333.2 L650 334.3 L649 335.3 L648 336.3 L647 337.3 L646 338.3 L645 339.2 L644 340.1 L643 341.0 L642 341.8 L641 342.6 L640 343.3 L639 344.1 L638 344.8 L637 345.4 L636 346.1 L635 346.7 L634 347.3 L633 347.8 L632 348.3 L631 348.8 L630 349.2 L629 349.7 L628 350.0 L627 350.4 L626 350.7 L625 351.0 L624 351.3 L623 351.5 L622 351.8 L621 351.9 L620 352.1 L619 352.2 L618 352.3 L617 352.4 L616 352.4 L615 352.4 L614 352.4 L613 352.4 L612 352.3 L611 352.2 L610 352.1 L609 352.0 L608 351.9 L607 351.7 L606 351.5 L605 351.3 L604 351.0 L603 350.8 L602 350.5 L601 350.2 L600 349.9 L599 349.5 L598 349.2 L597 348.8 L596 348.4 L595 348.0 L594 347.6 L593 347.2 L592 346.8 L591 346.3 L590 345.8 L589 345.4 L588 344.9 L587 344.4 L586 343.9 L585 343.3 L584 342.8 L583 342.3 L582 341.7 L581 341.2 L580 340.6 L579 340.1 L578 339.5 L577 338.9 L576 338.3 L575 337.8 L574 337.2 L573 336.6 L572 336.0 L571 335.5 L570 334.9 L569 334.3 L568 333.7 L567 333.2 L566 332.6 L565 332.0 L564 331.5 L563 330.9 L562 330.4 L561 329.8 L560 329.3 L559 328.8 L558 328.3 L557 327.8 L556 327.3 L555 326.8 L554 326.4 L553 325.9 L552 325.5 L551 325.1 L550 324.6 L549 324.2 L548 323.9 L547 323.5 L546 323.1 L545 322.8 L544 322.4 L543 322.1 L542 321.8 L541 321.5 L540 321.2 L539 320.9 L538 320.6 L537 320.4 L536 320.1 L535 319.9 L534 319.6 L533 319.4 L532 319.2 L531 319.0 L530 318.8 L529 318.6 L528 318.4 L527 318.3 L526 318.1 L525 318.0 L524 317.8 L523 317.7 L522 317.6 L521 317.4 L520 317.3 L519 317.2 L518 317.1 L517 317.1 L516 317.0 L515 316.9 L514 316.8 L513 316.8 L512 316.7 L511 316.7 L510 316.6 L509 316.6 L508 316.6 L507 316.6 L506 316.6 L505 316.6 L504 316.5 L503 316.6 L502 316.6 L501 316.6 L500 316.6 L499 316.6 L498 316.6 L497 316.7 L496 316.7 L495 316.8 L494 316.8 L493 316.9 L492 316.9 L491 317.0 L490 317.0 L489 317.1 L488 317.2 L487 317.2 L486 317.3 L485 317.4 L484 317.4 L483 317.5 L482 317.6 L481 317.7 L480 317.8 L479 317.9 L478 318.0 L477 318.1 L476 318.1 L475 318.2 L474 318.3 L473 318.4 L472 318.5 L471 318.6 L470 318.7 L469 318.8 L468 318.9 L467 319.0 L466 319.1 L465 319.2 L464 319.3 L463 319.4 L462 319.5 L461 319.6 L460 319.7 L459 319.8 L458 319.9 L457 320.0 L456 320.1 L455 320.2 L454 320.3 L453 320.4 L452 320.5 L451 320.6 L450 320.7 L449 320.7 L448 320.8 L447 320.9 L446 321.0 L445 321.0 L444 321.1 L443 321.2 L442 321.2 L441 321.3 L440 321.3 Z" fill="#22abc0"/>
<path d="M440 310.8 L441 310.8 L442 310.7 L443 310.7 L444 310.6 L445 310.5 L446 310.4 L447 310.4 L448 310.3 L449 310.2 L450 310.1 L451 310.0 L452 310.0 L453 309.9 L454 309.8 L455 309.7 L456 309.6 L457 309.5 L458 309.4 L459 309.3 L460 309.2 L461 309.1 L462 309.0 L463 308.9 L464 308.8 L465 308.7 L466 308.6 L467 308.5 L468 308.4 L469 308.3 L470 308.2 L471 308.1 L472 308.0 L473 307.9 L474 307.8 L475 307.7 L476 307.6 L477 307.5 L478 307.4 L479 307.3 L480 307.3 L481 307.2 L482 307.1 L483 307.0 L484 306.9 L485 306.8 L486 306.8 L487 306.7 L488 306.6 L489 306.6 L490 306.5 L491 306.4 L492 306.4 L493 306.3 L494 306.3 L495 306.3 L496 306.2 L497 306.2 L498 306.1 L499 306.1 L500 306.1 L501 306.1 L502 306.1 L503 306.1 L504 306.0 L505 306.1 L506 306.1 L507 306.1 L508 306.1 L509 306.1 L510 306.1 L511 306.2 L512 306.2 L513 306.3 L514 306.3 L515 306.4 L516 306.5 L517 306.5 L518 306.6 L519 306.7 L520 306.8 L521 306.9 L522 307.0 L523 307.1 L524 307.3 L525 307.4 L526 307.5 L527 307.7 L528 307.8 L529 308.0 L530 308.2 L531 308.4 L532 308.6 L533 308.8 L534 309.0 L535 309.2 L536 309.4 L537 309.7 L538 309.9 L539 310.2 L540 310.4 L541 310.7 L542 311.0 L543 311.3 L544 311.6 L545 311.9 L546 312.3 L547 312.6 L548 312.9 L549 313.3 L550 313.7 L551 314.1 L552 314.5 L553 314.9 L554 315.3 L555 315.7 L556 316.2 L557 316.6 L558 317.1 L559 317.6 L560 318.1 L561 318.6 L562 319.1 L563 319.6 L564 320.1 L565 320.6 L566 321.2 L567 321.7 L568 322.3 L569 322.9 L570 323.4 L571 324.0 L572 324.6 L573 325.1 L574 325.7 L575 326.3 L576 326.9 L577 327.5 L578 328.0 L579 328.6 L580 329.2 L581 329.7 L582 330.3 L583 330.9 L584 331.4 L585 332.0 L586 332.5 L587 333.1 L588 333.6 L589 334.1 L590 334.6 L591 335.1 L592 335.6 L593 336.1 L594 336.5 L595 337.0 L596 337.4 L597 337.8 L598 338.3 L599 338.6 L600 339.0 L601 339.4 L602 339.7 L603 340.0 L604 340.3 L605 340.6 L606 340.8 L607 341.1 L608 341.3 L609 341.4 L610 341.6 L611 341.7 L612 341.8 L613 341.9 L614 341.9 L615 341.9 L616 341.9 L617 341.9 L618 341.8 L619 341.7 L620 341.5 L621 341.3 L622 341.1 L623 340.8 L624 340.6 L625 340.2 L626 339.9 L627 339.5 L628 339.0 L629 338.5 L630 338.0 L631 337.5 L632 336.9 L633 336.3 L634 335.7 L635 335.0 L636 334.2 L637 333.5 L638 332.7 L639 331.9 L640 331.0 L641 330.1 L642 329.2 L643 328.2 L644 327.2 L645 326.1 L646 325.1 L647 324.0 L648 322.8 L649 321.6 L650 320.4 L651 319.1 L652 317.9 L653 316.6 L654 315.3 L655 313.9 L656 312.6 L657 311.2 L658 309.9 L659 308.6 L660 307.2 L661 305.9 L662 304.6 L663 303.2 L664 302.0 L665 300.7 L666 299.4 L667 298.2 L668 297.0 L669 295.9 L670 294.8 L671 293.7 L672 292.7 L673 291.7 L674 290.7 L675 289.9 L676 289.0 L677 288.3 L678 287.6 L679 286.9 L680 286.3 L681 285.8 L682 285.3 L683 284.9 L684 284.5 L685 284.2 L686 284.0 L687 283.8 L688 283.6 L689 283.5 L690 283.5 L691 283.5 L692 283.6 L693 283.8 L694 284.0 L695 284.2 L696 284.5 L697 284.9 L698 285.3 L699 285.9 L700 286.4 L701 287.1 L702 287.8 L703 288.5 L704 289.4 L705 290.3 L706 291.2 L707 292.2 L708 293.3 L709 294.4 L710 295.6 L711 296.8 L712 298.1 L713 299.4 L714 300.7 L715 302.1 L716 303.5 L717 304.9 L718 306.4 L719 307.8 L720 309.3 L721 310.9 L722 312.4 L723 313.9 L724 315.5 L725 317.0 L726 318.6 L727 320.1 L728 321.6 L729 323.1 L730 324.5 L731 325.9 L732 327.3 L733 328.6 L734 329.9 L735 331.1 L736 332.3 L737 333.4 L738 334.4 L739 335.4 L740 336.3 L741 337.1 L742 337.7 L743 338.3 L744 338.8 L745 339.2 L746 339.5 L747 339.6 L748 339.6 L749 339.5 L750 339.2 L751 338.8 L752 338.3 L753 337.7 L754 337.0 L755 336.2 L756 335.4 L757 334.4 L758 333.4 L759 332.4 L760 331.2 L761 330.1 L762 328.9 L763 327.6 L764 326.4 L765 325.1 L766 323.8 L767 322.4 L768 321.1 L769 319.8 L770 318.4 L771 317.1 L772 315.8 L773 314.5 L774 313.2 L775 311.9 L776 310.7 L777 309.5 L778 308.3 L779 307.2 L780 306.1 L781 305.0 L782 304.1 L783 303.2 L784 302.3 L785 301.5 L786 300.8 L787 300.2 L788 299.6 L789 299.1 L790 298.7 L791 298.3 L792 298.0 L793 297.7 L794 297.6 L795 297.4 L796 297.4 L797 297.3 L798 297.4 L799 297.5 L800 297.6 L801 297.8 L802 298.1 L803 298.4 L804 298.8 L805 299.2 L806 299.7 L807 300.3 L808 300.9 L809 301.5 L810 302.3 L811 303.0 L812 303.8 L813 304.7 L814 305.6 L815 306.5 L816 307.4 L817 308.4 L818 309.4 L819 310.4 L820 311.4 L821 312.4 L822 313.4 L823 314.4 L824 315.4 L825 316.4 L826 317.3 L827 318.3 L828 319.2 L829 320.0 L830 320.8 L831 321.6 L832 322.3 L833 322.9 L834 323.5 L835 324.1 L836 324.5 L837 324.9 L838 325.2 L839 325.4 L840 325.5 L841 325.6 L842 325.5 L843 325.4 L844 325.2 L845 325.0 L846 324.7 L847 324.3 L848 323.9 L849 323.5 L850 323.0 L851 322.5 L852 321.9 L853 321.4 L854 320.8 L855 320.2 L856 319.7 L857 319.1 L858 318.5 L859 317.9 L860 317.4 L861 316.8 L862 316.2 L863 315.7 L864 315.2 L865 314.6 L866 314.1 L867 313.6 L868 313.1 L869 312.6 L870 312.2 L871 311.7 L872 311.3 L873 310.9 L874 310.5 L875 310.1 L876 309.8 L877 309.5 L878 309.2 L879 308.9 L880 308.6 L881 308.4 L882 308.2 L883 308.0 L884 307.9 L885 307.8 L886 307.7 L887 307.6 L888 307.6 L889 307.6 L890 307.7 L891 307.8 L892 307.9 L893 308.0 L894 308.2 L895 308.4 L896 308.7 L897 309.0 L898 309.3 L899 309.7 L900 310.1 L901 310.6 L902 311.1 L903 311.7 L904 312.3 L905 313.0 L906 313.7 L907 314.4 L908 315.2 L909 316.1 L910 317.0 L911 318.0 L912 319.0 L913 320.1 L914 321.2 L914 334.9 L913 333.5 L912 332.1 L911 330.8 L910 329.6 L909 328.4 L908 327.3 L907 326.2 L906 325.2 L905 324.3 L904 323.5 L903 322.7 L902 322.0 L901 321.3 L900 320.7 L899 320.1 L898 319.6 L897 319.2 L896 318.8 L895 318.5 L894 318.2 L893 317.9 L892 317.7 L891 317.6 L890 317.5 L889 317.4 L888 317.4 L887 317.4 L886 317.5 L885 317.6 L884 317.8 L883 317.9 L882 318.1 L881 318.4 L880 318.6 L879 318.9 L878 319.2 L877 319.6 L876 320.0 L875 320.4 L874 320.8 L873 321.2 L872 321.7 L871 322.1 L870 322.6 L869 323.1 L868 323.6 L867 324.1 L866 324.7 L865 325.2 L864 325.8 L863 326.3 L862 326.9 L861 327.5 L860 328.1 L859 328.6 L858 329.2 L857 329.8 L856 330.4 L855 330.9 L854 331.4 L853 332.0 L852 332.5 L851 332.9 L850 333.4 L849 333.8 L848 334.1 L847 334.4 L846 334.7 L845 334.9 L844 335.1 L843 335.3 L842 335.3 L841 335.4 L840 335.3 L839 335.3 L838 335.1 L837 334.9 L836 334.6 L835 334.3 L834 334.0 L833 333.5 L832 333.1 L831 332.5 L830 331.9 L829 331.3 L828 330.6 L827 329.9 L826 329.1 L825 328.2 L824 327.4 L823 326.5 L822 325.5 L821 324.6 L820 323.6 L819 322.6 L818 321.6 L817 320.6 L816 319.6 L815 318.6 L814 317.6 L813 316.6 L812 315.6 L811 314.7 L810 313.8 L809 312.9 L808 312.1 L807 311.3 L806 310.5 L805 309.9 L804 309.3 L803 308.7 L802 308.3 L801 307.9 L800 307.6 L799 307.4 L798 307.2 L797 307.1 L796 307.2 L795 307.3 L794 307.5 L793 307.8 L792 308.1 L791 308.6 L790 309.2 L789 309.8 L788 310.6 L787 311.4 L786 312.3 L785 313.3 L784 314.3 L783 315.4 L782 316.5 L781 317.7 L780 318.9 L779 320.2 L778 321.5 L777 322.8 L776 324.1 L775 325.4 L774 326.8 L773 328.1 L772 329.5 L771 330.8 L770 332.1 L769 333.4 L768 334.7 L767 335.9 L766 337.2 L765 338.3 L764 339.5 L763 340.6 L762 341.6 L761 342.6 L760 343.6 L759 344.5 L758 345.3 L757 346.0 L756 346.7 L755 347.3 L754 347.8 L753 348.3 L752 348.7 L751 349.0 L750 349.2 L749 349.4 L748 349.4 L747 349.4 L746 349.3 L745 349.2 L744 349.0 L743 348.7 L742 348.3 L741 347.9 L740 347.3 L739 346.7 L738 346.1 L737 345.3 L736 344.5 L735 343.6 L734 342.7 L733 341.7 L732 340.6 L731 339.4 L730 338.2 L729 337.0 L728 335.7 L727 334.3 L726 332.9 L725 331.5 L724 330.0 L723 328.6 L722 327.1 L721 325.5 L720 324.0 L719 322.5 L718 320.9 L717 319.4 L716 317.8 L715 316.3 L714 314.8 L713 313.3 L712 311.9 L711 310.5 L710 309.1 L709 307.7 L708 306.4 L707 305.1 L706 303.9 L705 302.7 L704 301.6 L703 300.5 L702 299.5 L701 298.5 L700 297.6 L699 296.8 L698 296.1 L697 295.4 L696 294.9 L695 294.4 L694 294.0 L693 293.7 L692 293.5 L691 293.4 L690 293.3 L689 293.4 L688 293.5 L687 293.7 L686 294.0 L685 294.4 L684 294.8 L683 295.3 L682 295.9 L681 296.6 L680 297.3 L679 298.1 L678 299.0 L677 299.9 L676 300.9 L675 301.9 L674 303.0 L673 304.1 L672 305.3 L671 306.5 L670 307.7 L669 309.0 L668 310.3 L667 311.6 L666 312.9 L665 314.2 L664 315.6 L663 316.9 L662 318.3 L661 319.6 L660 320.9 L659 322.3 L658 323.6 L657 324.9 L656 326.2 L655 327.5 L654 328.7 L653 329.9 L652 331.1 L651 332.2 L650 333.3 L649 334.4 L648 335.4 L647 336.4 L646 337.4 L645 338.3 L644 339.2 L643 340.1 L642 340.9 L641 341.7 L640 342.5 L639 343.3 L638 344.0 L637 344.6 L636 345.3 L635 345.9 L634 346.5 L633 347.0 L632 347.5 L631 348.0 L630 348.5 L629 348.9 L628 349.3 L627 349.7 L626 350.0 L625 350.3 L624 350.6 L623 350.8 L622 351.0 L621 351.2 L620 351.4 L619 351.5 L618 351.6 L617 351.7 L616 351.7 L615 351.7 L614 351.7 L613 351.7 L612 351.6 L611 351.5 L610 351.4 L609 351.3 L608 351.1 L607 351.0 L606 350.8 L605 350.6 L604 350.3 L603 350.0 L602 349.8 L601 349.5 L600 349.2 L599 348.8 L598 348.5 L597 348.1 L596 347.7 L595 347.3 L594 346.9 L593 346.5 L592 346.0 L591 345.6 L590 345.1 L589 344.6 L588 344.1 L587 343.6 L586 343.1 L585 342.6 L584 342.0 L583 341.5 L582 341.0 L581 340.4 L580 339.9 L579 339.3 L578 338.7 L577 338.2 L576 337.6 L575 337.0 L574 336.4 L573 335.9 L572 335.3 L571 334.7 L570 334.1 L569 333.5 L568 333.0 L567 332.4 L566 331.8 L565 331.3 L564 330.7 L563 330.2 L562 329.6 L561 329.1 L560 328.6 L559 328.1 L558 327.5 L557 327.0 L556 326.6 L555 326.1 L554 325.6 L553 325.2 L552 324.7 L551 324.3 L550 323.9 L549 323.5 L548 323.1 L547 322.8 L546 322.4 L545 322.0 L544 321.7 L543 321.4 L542 321.1 L541 320.8 L540 320.5 L539 320.2 L538 319.9 L537 319.6 L536 319.4 L535 319.1 L534 318.9 L533 318.7 L532 318.5 L531 318.3 L530 318.1 L529 317.9 L528 317.7 L527 317.6 L526 317.4 L525 317.3 L524 317.1 L523 317.0 L522 316.9 L521 316.7 L520 316.6 L519 316.5 L518 316.4 L517 316.4 L516 316.3 L515 316.2 L514 316.1 L513 316.1 L512 316.0 L511 316.0 L510 315.9 L509 315.9 L508 315.9 L507 315.9 L506 315.9 L505 315.9 L504 315.8 L503 315.9 L502 315.9 L501 315.9 L500 315.9 L499 315.9 L498 315.9 L497 316.0 L496 316.0 L495 316.1 L494 316.1 L493 316.1 L492 316.2 L491 316.3 L490 316.3 L489 316.4 L488 316.4 L487 316.5 L486 316.6 L485 316.7 L484 316.7 L483 316.8 L482 316.9 L481 317.0 L480 317.1 L479 317.2 L478 317.3 L477 317.4 L476 317.4 L475 317.5 L474 317.6 L473 317.7 L472 317.8 L471 317.9 L470 318.0 L469 318.1 L468 318.2 L467 318.3 L466 318.4 L465 318.5 L464 318.6 L463 318.7 L462 318.8 L461 318.9 L460 319.0 L459 319.1 L458 319.2 L457 319.3 L456 319.4 L455 319.5 L454 319.6 L453 319.7 L452 319.8 L451 319.9 L450 319.9 L449 320.0 L448 320.1 L447 320.2 L446 320.3 L445 320.3 L444 320.4 L443 320.5 L442 320.5 L441 320.6 L440 320.6 Z" fill="#78c070"/>
<path d="M440 311.5 L441 311.5 L442 311.4 L443 311.4 L444 311.3 L445 311.2 L446 311.1 L447 311.1 L448 311.0 L449 310.9 L450 310.8 L451 310.7 L452 310.7 L453 310.6 L454 310.5 L455 310.4 L456 310.3 L457 310.2 L458 310.1 L459 310.0 L460 309.9 L461 309.8 L462 309.7 L463 309.6 L464 309.5 L465 309.4 L466 309.3 L467 309.2 L468 309.1 L469 309.0 L470 308.9 L471 308.8 L472 308.7 L473 308.6 L474 308.5 L475 308.4 L476 308.3 L477 308.2 L478 308.1 L479 308.0 L480 308.0 L481 307.9 L482 307.8 L483 307.7 L484 307.6 L485 307.6 L486 307.5 L487 307.4 L488 307.3 L489 307.3 L490 307.2 L491 307.2 L492 307.1 L493 307.0 L494 307.0 L495 307.0 L496 306.9 L497 306.9 L498 306.8 L499 306.8 L500 306.8 L501 306.8 L502 306.8 L503 306.8 L504 306.7 L505 306.8 L506 306.8 L507 306.8 L508 306.8 L509 306.8 L510 306.8 L511 306.9 L512 306.9 L513 307.0 L514 307.0 L515 307.1 L516 307.2 L517 307.2 L518 307.3 L519 307.4 L520 307.5 L521 307.6 L522 307.7 L523 307.8 L524 308.0 L525 308.1 L526 308.2 L527 308.4 L528 308.5 L529 308.7 L530 308.9 L531 309.1 L532 309.3 L533 309.5 L534 309.7 L535 309.9 L536 310.1 L537 310.4 L538 310.6 L539 310.9 L540 311.2 L541 311.4 L542 311.7 L543 312.0 L544 312.3 L545 312.6 L546 313.0 L547 313.3 L548 313.7 L549 314.0 L550 314.4 L551 314.8 L552 315.2 L553 315.6 L554 316.0 L555 316.5 L556 316.9 L557 317.4 L558 317.8 L559 318.3 L560 318.8 L561 319.3 L562 319.8 L563 320.3 L564 320.9 L565 321.4 L566 322.0 L567 322.5 L568 323.1 L569 323.6 L570 324.2 L571 324.8 L572 325.3 L573 325.9 L574 326.5 L575 327.1 L576 327.6 L577 328.2 L578 328.8 L579 329.4 L580 329.9 L581 330.5 L582 331.1 L583 331.6 L584 332.2 L585 332.7 L586 333.3 L587 333.8 L588 334.3 L589 334.9 L590 335.4 L591 335.9 L592 336.3 L593 336.8 L594 337.3 L595 337.7 L596 338.2 L597 338.6 L598 339.0 L599 339.4 L600 339.7 L601 340.1 L602 340.4 L603 340.7 L604 341.0 L605 341.3 L606 341.5 L607 341.8 L608 342.0 L609 342.1 L610 342.3 L611 342.4 L612 342.5 L613 342.6 L614 342.6 L615 342.6 L616 342.6 L617 342.6 L618 342.5 L619 342.4 L620 342.2 L621 342.0 L622 341.8 L623 341.6 L624 341.3 L625 340.9 L626 340.6 L627 340.2 L628 339.8 L629 339.3 L630 338.8 L631 338.2 L632 337.7 L633 337.1 L634 336.4 L635 335.7 L636 335.0 L637 334.3 L638 333.5 L639 332.7 L640 331.8 L641 330.9 L642 330.0 L643 329.0 L644 328.0 L645 327.0 L646 325.9 L647 324.8 L648 323.7 L649 322.5 L650 321.3 L651 320.1 L652 318.8 L653 317.5 L654 316.2 L655 314.9 L656 313.6 L657 312.2 L658 310.9 L659 309.5 L660 308.2 L661 306.9 L662 305.5 L663 304.2 L664 302.9 L665 301.7 L666 300.4 L667 299.2 L668 298.0 L669 296.8 L670 295.7 L671 294.6 L672 293.6 L673 292.6 L674 291.6 L675 290.7 L676 289.9 L677 289.1 L678 288.4 L679 287.7 L680 287.1 L681 286.6 L682 286.1 L683 285.6 L684 285.3 L685 284.9 L686 284.7 L687 284.5 L688 284.3 L689 284.2 L690 284.2 L691 284.2 L692 284.3 L693 284.5 L694 284.7 L695 284.9 L696 285.3 L697 285.7 L698 286.1 L699 286.6 L700 287.2 L701 287.9 L702 288.6 L703 289.4 L704 290.3 L705 291.2 L706 292.1 L707 293.2 L708 294.2 L709 295.4 L710 296.6 L711 297.8 L712 299.0 L713 300.4 L714 301.7 L715 303.1 L716 304.5 L717 305.9 L718 307.4 L719 308.9 L720 310.4 L721 311.9 L722 313.5 L723 315.0 L724 316.5 L725 318.1 L726 319.6 L727 321.1 L728 322.6 L729 324.0 L730 325.5 L731 326.9 L732 328.2 L733 329.6 L734 330.8 L735 332.0 L736 333.2 L737 334.3 L738 335.3 L739 336.2 L740 337.1 L741 337.8 L742 338.5 L743 339.1 L744 339.6 L745 339.9 L746 340.2 L747 340.3 L748 340.3 L749 340.2 L750 339.9 L751 339.5 L752 339.1 L753 338.5 L754 337.8 L755 337.0 L756 336.2 L757 335.2 L758 334.3 L759 333.2 L760 332.1 L761 331.0 L762 329.8 L763 328.6 L764 327.3 L765 326.0 L766 324.7 L767 323.4 L768 322.1 L769 320.7 L770 319.4 L771 318.1 L772 316.7 L773 315.4 L774 314.1 L775 312.9 L776 311.6 L777 310.4 L778 309.2 L779 308.1 L780 307.0 L781 306.0 L782 305.0 L783 304.0 L784 303.2 L785 302.4 L786 301.6 L787 301.0 L788 300.4 L789 299.9 L790 299.4 L791 299.0 L792 298.7 L793 298.5 L794 298.3 L795 298.1 L796 298.1 L797 298.0 L798 298.1 L799 298.2 L800 298.3 L801 298.6 L802 298.8 L803 299.2 L804 299.6 L805 300.0 L806 300.5 L807 301.1 L808 301.7 L809 302.4 L810 303.1 L811 303.8 L812 304.7 L813 305.5 L814 306.4 L815 307.3 L816 308.3 L817 309.3 L818 310.2 L819 311.2 L820 312.2 L821 313.3 L822 314.3 L823 315.3 L824 316.2 L825 317.2 L826 318.2 L827 319.1 L828 320.0 L829 320.8 L830 321.6 L831 322.4 L832 323.1 L833 323.7 L834 324.3 L835 324.8 L836 325.2 L837 325.6 L838 325.9 L839 326.1 L840 326.2 L841 326.3 L842 326.2 L843 326.1 L844 325.9 L845 325.7 L846 325.4 L847 325.0 L848 324.6 L849 324.2 L850 323.7 L851 323.2 L852 322.7 L853 322.1 L854 321.6 L855 321.0 L856 320.4 L857 319.8 L858 319.3 L859 318.7 L860 318.1 L861 317.6 L862 317.0 L863 316.5 L864 315.9 L865 315.4 L866 314.9 L867 314.4 L868 313.9 L869 313.4 L870 312.9 L871 312.5 L872 312.0 L873 311.6 L874 311.2 L875 310.9 L876 310.5 L877 310.2 L878 309.9 L879 309.6 L880 309.3 L881 309.1 L882 308.9 L883 308.7 L884 308.6 L885 308.5 L886 308.4 L887 308.3 L888 308.3 L889 308.3 L890 308.4 L891 308.5 L892 308.6 L893 308.7 L894 308.9 L895 309.1 L896 309.4 L897 309.7 L898 310.1 L899 310.5 L900 310.9 L901 311.4 L902 311.9 L903 312.5 L904 313.1 L905 313.8 L906 314.5 L907 315.3 L908 316.1 L909 317.0 L910 317.9 L911 318.9 L912 319.9 L913 321.0 L914 322.2 L914 334.0 L913 332.5 L912 331.2 L911 329.9 L910 328.7 L909 327.5 L908 326.4 L907 325.4 L906 324.4 L905 323.5 L904 322.7 L903 321.9 L902 321.2 L901 320.5 L900 319.9 L899 319.4 L898 318.9 L897 318.5 L896 318.1 L895 317.7 L894 317.5 L893 317.2 L892 317.0 L891 316.9 L890 316.8 L889 316.7 L888 316.7 L887 316.7 L886 316.8 L885 316.9 L884 317.0 L883 317.2 L882 317.4 L881 317.7 L880 317.9 L879 318.2 L878 318.5 L877 318.9 L876 319.2 L875 319.6 L874 320.0 L873 320.5 L872 320.9 L871 321.4 L870 321.9 L869 322.4 L868 322.9 L867 323.4 L866 323.9 L865 324.5 L864 325.0 L863 325.6 L862 326.1 L861 326.7 L860 327.3 L859 327.9 L858 328.4 L857 329.0 L856 329.6 L855 330.1 L854 330.7 L853 331.2 L852 331.7 L851 332.2 L850 332.6 L849 333.0 L848 333.4 L847 333.7 L846 334.0 L845 334.2 L844 334.4 L843 334.6 L842 334.6 L841 334.7 L840 334.6 L839 334.5 L838 334.4 L837 334.2 L836 333.9 L835 333.6 L834 333.2 L833 332.8 L832 332.3 L831 331.7 L830 331.1 L829 330.5 L828 329.8 L827 329.0 L826 328.2 L825 327.4 L824 326.5 L823 325.6 L822 324.7 L821 323.7 L820 322.7 L819 321.7 L818 320.7 L817 319.7 L816 318.7 L815 317.7 L814 316.7 L813 315.7 L812 314.8 L811 313.8 L810 312.9 L809 312.1 L808 311.3 L807 310.5 L806 309.8 L805 309.1 L804 308.5 L803 308.0 L802 307.5 L801 307.2 L800 306.9 L799 306.7 L798 306.5 L797 306.4 L796 306.5 L795 306.6 L794 306.8 L793 307.0 L792 307.4 L791 307.9 L790 308.4 L789 309.1 L788 309.8 L787 310.6 L786 311.5 L785 312.4 L784 313.5 L783 314.5 L782 315.6 L781 316.8 L780 318.0 L779 319.3 L778 320.5 L777 321.8 L776 323.1 L775 324.5 L774 325.8 L773 327.1 L772 328.5 L771 329.8 L770 331.1 L769 332.4 L768 333.7 L767 335.0 L766 336.2 L765 337.4 L764 338.6 L763 339.7 L762 340.7 L761 341.7 L760 342.7 L759 343.6 L758 344.4 L757 345.2 L756 345.9 L755 346.5 L754 347.1 L753 347.5 L752 347.9 L751 348.3 L750 348.5 L749 348.6 L748 348.7 L747 348.7 L746 348.6 L745 348.5 L744 348.3 L743 347.9 L742 347.6 L741 347.1 L740 346.6 L739 345.9 L738 345.2 L737 344.5 L736 343.6 L735 342.7 L734 341.8 L733 340.7 L732 339.6 L731 338.5 L730 337.2 L729 336.0 L728 334.6 L727 333.3 L726 331.9 L725 330.5 L724 329.0 L723 327.5 L722 326.0 L721 324.5 L720 323.0 L719 321.4 L718 319.9 L717 318.3 L716 316.8 L715 315.3 L714 313.8 L713 312.3 L712 310.9 L711 309.5 L710 308.1 L709 306.8 L708 305.5 L707 304.2 L706 303.0 L705 301.8 L704 300.7 L703 299.6 L702 298.6 L701 297.7 L700 296.8 L699 296.0 L698 295.3 L697 294.7 L696 294.1 L695 293.7 L694 293.3 L693 293.0 L692 292.8 L691 292.7 L690 292.6 L689 292.7 L688 292.8 L687 293.0 L686 293.3 L685 293.6 L684 294.1 L683 294.6 L682 295.1 L681 295.8 L680 296.5 L679 297.3 L678 298.2 L677 299.1 L676 300.0 L675 301.1 L674 302.1 L673 303.3 L672 304.4 L671 305.6 L670 306.8 L669 308.1 L668 309.3 L667 310.6 L666 311.9 L665 313.3 L664 314.6 L663 315.9 L662 317.3 L661 318.6 L660 320.0 L659 321.3 L658 322.6 L657 323.9 L656 325.2 L655 326.5 L654 327.7 L653 329.0 L652 330.1 L651 331.3 L650 332.4 L649 333.5 L648 334.5 L647 335.5 L646 336.5 L645 337.5 L644 338.4 L643 339.3 L642 340.1 L641 340.9 L640 341.7 L639 342.4 L638 343.2 L637 343.8 L636 344.5 L635 345.1 L634 345.7 L633 346.3 L632 346.8 L631 347.3 L630 347.7 L629 348.2 L628 348.6 L627 348.9 L626 349.3 L625 349.6 L624 349.9 L623 350.1 L622 350.3 L621 350.5 L620 350.7 L619 350.8 L618 350.9 L617 351.0 L616 351.0 L615 351.0 L614 351.0 L613 351.0 L612 350.9 L611 350.8 L610 350.7 L609 350.6 L608 350.4 L607 350.3 L606 350.1 L605 349.8 L604 349.6 L603 349.3 L602 349.0 L601 348.7 L600 348.4 L599 348.1 L598 347.7 L597 347.4 L596 347.0 L595 346.6 L594 346.1 L593 345.7 L592 345.3 L591 344.8 L590 344.3 L589 343.9 L588 343.4 L587 342.9 L586 342.3 L585 341.8 L584 341.3 L583 340.7 L582 340.2 L581 339.6 L580 339.1 L579 338.5 L578 338.0 L577 337.4 L576 336.8 L575 336.2 L574 335.7 L573 335.1 L572 334.5 L571 333.9 L570 333.4 L569 332.8 L568 332.2 L567 331.6 L566 331.1 L565 330.5 L564 330.0 L563 329.4 L562 328.9 L561 328.3 L560 327.8 L559 327.3 L558 326.8 L557 326.3 L556 325.8 L555 325.3 L554 324.9 L553 324.4 L552 324.0 L551 323.6 L550 323.2 L549 322.8 L548 322.4 L547 322.0 L546 321.7 L545 321.3 L544 321.0 L543 320.7 L542 320.3 L541 320.0 L540 319.7 L539 319.5 L538 319.2 L537 318.9 L536 318.7 L535 318.4 L534 318.2 L533 318.0 L532 317.8 L531 317.6 L530 317.4 L529 317.2 L528 317.0 L527 316.9 L526 316.7 L525 316.5 L524 316.4 L523 316.3 L522 316.2 L521 316.0 L520 315.9 L519 315.8 L518 315.7 L517 315.6 L516 315.6 L515 315.5 L514 315.4 L513 315.4 L512 315.3 L511 315.3 L510 315.2 L509 315.2 L508 315.2 L507 315.2 L506 315.2 L505 315.2 L504 315.1 L503 315.2 L502 315.2 L501 315.2 L500 315.2 L499 315.2 L498 315.2 L497 315.3 L496 315.3 L495 315.4 L494 315.4 L493 315.4 L492 315.5 L491 315.6 L490 315.6 L489 315.7 L488 315.7 L487 315.8 L486 315.9 L485 316.0 L484 316.0 L483 316.1 L482 316.2 L481 316.3 L480 316.4 L479 316.5 L478 316.6 L477 316.7 L476 316.7 L475 316.8 L474 316.9 L473 317.0 L472 317.1 L471 317.2 L470 317.3 L469 317.4 L468 317.5 L467 317.6 L466 317.7 L465 317.8 L464 317.9 L463 318.0 L462 318.1 L461 318.2 L460 318.3 L459 318.4 L458 318.5 L457 318.6 L456 318.7 L455 318.8 L454 318.9 L453 319.0 L452 319.1 L451 319.2 L450 319.2 L449 319.3 L448 319.4 L447 319.5 L446 319.6 L445 319.6 L444 319.7 L443 319.8 L442 319.8 L441 319.9 L440 319.9 Z" fill="#dccc38"/>
<path d="M440 312.7 L441 312.7 L442 312.6 L443 312.6 L444 312.5 L445 312.4 L446 312.3 L447 312.3 L448 312.2 L449 312.1 L450 312.0 L451 311.9 L452 311.9 L453 311.8 L454 311.7 L455 311.6 L456 311.5 L457 311.4 L458 311.3 L459 311.2 L460 311.1 L461 311.0 L462 310.9 L463 310.8 L464 310.7 L465 310.6 L466 310.5 L467 310.4 L468 310.3 L469 310.2 L470 310.1 L471 310.0 L472 309.9 L473 309.8 L474 309.7 L475 309.6 L476 309.5 L477 309.4 L478 309.3 L479 309.2 L480 309.2 L481 309.1 L482 309.0 L483 308.9 L484 308.8 L485 308.8 L486 308.7 L487 308.6 L488 308.5 L489 308.5 L490 308.4 L491 308.4 L492 308.3 L493 308.2 L494 308.2 L495 308.2 L496 308.1 L497 308.1 L498 308.0 L499 308.0 L500 308.0 L501 308.0 L502 308.0 L503 308.0 L504 307.9 L505 308.0 L506 308.0 L507 308.0 L508 308.0 L509 308.0 L510 308.0 L511 308.1 L512 308.1 L513 308.2 L514 308.2 L515 308.3 L516 308.4 L517 308.4 L518 308.5 L519 308.6 L520 308.7 L521 308.8 L522 308.9 L523 309.0 L524 309.2 L525 309.3 L526 309.4 L527 309.6 L528 309.8 L529 309.9 L530 310.1 L531 310.3 L532 310.5 L533 310.7 L534 310.9 L535 311.1 L536 311.4 L537 311.6 L538 311.8 L539 312.1 L540 312.4 L541 312.7 L542 313.0 L543 313.3 L544 313.6 L545 313.9 L546 314.2 L547 314.6 L548 314.9 L549 315.3 L550 315.7 L551 316.1 L552 316.5 L553 316.9 L554 317.3 L555 317.7 L556 318.2 L557 318.6 L558 319.1 L559 319.6 L560 320.1 L561 320.6 L562 321.1 L563 321.6 L564 322.2 L565 322.7 L566 323.3 L567 323.8 L568 324.4 L569 324.9 L570 325.5 L571 326.1 L572 326.6 L573 327.2 L574 327.8 L575 328.4 L576 328.9 L577 329.5 L578 330.1 L579 330.7 L580 331.2 L581 331.8 L582 332.4 L583 332.9 L584 333.5 L585 334.0 L586 334.6 L587 335.1 L588 335.6 L589 336.1 L590 336.6 L591 337.1 L592 337.6 L593 338.1 L594 338.5 L595 339.0 L596 339.4 L597 339.8 L598 340.2 L599 340.6 L600 341.0 L601 341.3 L602 341.6 L603 342.0 L604 342.2 L605 342.5 L606 342.8 L607 343.0 L608 343.2 L609 343.3 L610 343.5 L611 343.6 L612 343.7 L613 343.8 L614 343.8 L615 343.8 L616 343.8 L617 343.8 L618 343.7 L619 343.6 L620 343.4 L621 343.2 L622 343.0 L623 342.8 L624 342.5 L625 342.2 L626 341.8 L627 341.4 L628 341.0 L629 340.6 L630 340.1 L631 339.5 L632 339.0 L633 338.4 L634 337.8 L635 337.1 L636 336.4 L637 335.7 L638 334.9 L639 334.1 L640 333.2 L641 332.4 L642 331.4 L643 330.5 L644 329.5 L645 328.5 L646 327.5 L647 326.4 L648 325.3 L649 324.1 L650 322.9 L651 321.7 L652 320.4 L653 319.2 L654 317.9 L655 316.5 L656 315.2 L657 313.9 L658 312.6 L659 311.2 L660 309.9 L661 308.5 L662 307.2 L663 305.9 L664 304.6 L665 303.3 L666 302.0 L667 300.8 L668 299.6 L669 298.4 L670 297.3 L671 296.2 L672 295.1 L673 294.1 L674 293.1 L675 292.2 L676 291.3 L677 290.5 L678 289.8 L679 289.1 L680 288.4 L681 287.9 L682 287.4 L683 286.9 L684 286.5 L685 286.2 L686 285.9 L687 285.7 L688 285.5 L689 285.4 L690 285.4 L691 285.4 L692 285.5 L693 285.7 L694 285.9 L695 286.2 L696 286.5 L697 286.9 L698 287.4 L699 288.0 L700 288.6 L701 289.3 L702 290.0 L703 290.9 L704 291.7 L705 292.7 L706 293.7 L707 294.7 L708 295.8 L709 297.0 L710 298.2 L711 299.4 L712 300.7 L713 302.1 L714 303.4 L715 304.8 L716 306.2 L717 307.7 L718 309.2 L719 310.7 L720 312.2 L721 313.7 L722 315.2 L723 316.8 L724 318.3 L725 319.8 L726 321.3 L727 322.8 L728 324.3 L729 325.8 L730 327.2 L731 328.5 L732 329.9 L733 331.2 L734 332.4 L735 333.6 L736 334.7 L737 335.7 L738 336.7 L739 337.6 L740 338.4 L741 339.1 L742 339.8 L743 340.3 L744 340.8 L745 341.2 L746 341.4 L747 341.5 L748 341.5 L749 341.4 L750 341.2 L751 340.8 L752 340.3 L753 339.8 L754 339.1 L755 338.4 L756 337.6 L757 336.7 L758 335.7 L759 334.7 L760 333.6 L761 332.5 L762 331.4 L763 330.2 L764 328.9 L765 327.7 L766 326.4 L767 325.1 L768 323.7 L769 322.4 L770 321.1 L771 319.7 L772 318.4 L773 317.1 L774 315.8 L775 314.5 L776 313.3 L777 312.0 L778 310.8 L779 309.7 L780 308.6 L781 307.5 L782 306.5 L783 305.5 L784 304.6 L785 303.8 L786 303.0 L787 302.3 L788 301.7 L789 301.2 L790 300.7 L791 300.3 L792 300.0 L793 299.7 L794 299.5 L795 299.3 L796 299.3 L797 299.2 L798 299.3 L799 299.4 L800 299.6 L801 299.8 L802 300.1 L803 300.4 L804 300.8 L805 301.3 L806 301.8 L807 302.4 L808 303.0 L809 303.7 L810 304.5 L811 305.3 L812 306.1 L813 307.0 L814 307.9 L815 308.8 L816 309.8 L817 310.7 L818 311.7 L819 312.7 L820 313.7 L821 314.7 L822 315.7 L823 316.7 L824 317.7 L825 318.7 L826 319.6 L827 320.5 L828 321.4 L829 322.2 L830 323.0 L831 323.7 L832 324.4 L833 325.0 L834 325.6 L835 326.0 L836 326.5 L837 326.8 L838 327.1 L839 327.3 L840 327.4 L841 327.5 L842 327.4 L843 327.3 L844 327.1 L845 326.9 L846 326.6 L847 326.3 L848 325.9 L849 325.4 L850 325.0 L851 324.5 L852 324.0 L853 323.4 L854 322.9 L855 322.3 L856 321.7 L857 321.2 L858 320.6 L859 320.0 L860 319.4 L861 318.9 L862 318.3 L863 317.8 L864 317.2 L865 316.7 L866 316.2 L867 315.7 L868 315.2 L869 314.7 L870 314.2 L871 313.7 L872 313.3 L873 312.9 L874 312.5 L875 312.1 L876 311.8 L877 311.4 L878 311.1 L879 310.8 L880 310.6 L881 310.3 L882 310.1 L883 310.0 L884 309.8 L885 309.7 L886 309.6 L887 309.5 L888 309.5 L889 309.5 L890 309.6 L891 309.7 L892 309.8 L893 309.9 L894 310.1 L895 310.4 L896 310.7 L897 311.0 L898 311.3 L899 311.7 L900 312.2 L901 312.7 L902 313.2 L903 313.8 L904 314.5 L905 315.2 L906 315.9 L907 316.7 L908 317.6 L909 318.5 L910 319.4 L911 320.5 L912 321.5 L913 322.7 L914 323.9 L914 332.3 L913 330.9 L912 329.6 L911 328.3 L910 327.1 L909 326.0 L908 324.9 L907 323.9 L906 323.0 L905 322.1 L904 321.3 L903 320.6 L902 319.9 L901 319.2 L900 318.6 L899 318.1 L898 317.6 L897 317.2 L896 316.8 L895 316.5 L894 316.2 L893 316.0 L892 315.8 L891 315.7 L890 315.6 L889 315.5 L888 315.5 L887 315.5 L886 315.6 L885 315.7 L884 315.8 L883 316.0 L882 316.2 L881 316.4 L880 316.7 L879 317.0 L878 317.3 L877 317.6 L876 318.0 L875 318.4 L874 318.8 L873 319.2 L872 319.6 L871 320.1 L870 320.6 L869 321.1 L868 321.6 L867 322.1 L866 322.6 L865 323.2 L864 323.7 L863 324.3 L862 324.8 L861 325.4 L860 326.0 L859 326.6 L858 327.1 L857 327.7 L856 328.3 L855 328.8 L854 329.4 L853 329.9 L852 330.4 L851 330.9 L850 331.3 L849 331.8 L848 332.1 L847 332.5 L846 332.8 L845 333.0 L844 333.2 L843 333.3 L842 333.4 L841 333.5 L840 333.4 L839 333.3 L838 333.2 L837 333.0 L836 332.7 L835 332.3 L834 331.9 L833 331.5 L832 331.0 L831 330.4 L830 329.8 L829 329.1 L828 328.4 L827 327.6 L826 326.8 L825 325.9 L824 325.0 L823 324.1 L822 323.2 L821 322.2 L820 321.2 L819 320.2 L818 319.2 L817 318.2 L816 317.2 L815 316.2 L814 315.2 L813 314.3 L812 313.3 L811 312.4 L810 311.5 L809 310.7 L808 309.9 L807 309.1 L806 308.4 L805 307.8 L804 307.2 L803 306.7 L802 306.3 L801 305.9 L800 305.7 L799 305.4 L798 305.3 L797 305.2 L796 305.3 L795 305.4 L794 305.6 L793 305.8 L792 306.2 L791 306.6 L790 307.1 L789 307.7 L788 308.4 L787 309.2 L786 310.1 L785 311.0 L784 312.0 L783 313.0 L782 314.1 L781 315.3 L780 316.4 L779 317.7 L778 318.9 L777 320.2 L776 321.5 L775 322.8 L774 324.1 L773 325.5 L772 326.8 L771 328.1 L770 329.5 L769 330.8 L768 332.1 L767 333.3 L766 334.6 L765 335.8 L764 336.9 L763 338.1 L762 339.2 L761 340.2 L760 341.2 L759 342.1 L758 343.0 L757 343.8 L756 344.5 L755 345.2 L754 345.7 L753 346.3 L752 346.7 L751 347.0 L750 347.3 L749 347.4 L748 347.5 L747 347.5 L746 347.4 L745 347.3 L744 347.0 L743 346.7 L742 346.3 L741 345.8 L740 345.2 L739 344.5 L738 343.8 L737 343.0 L736 342.1 L735 341.2 L734 340.2 L733 339.1 L732 338.0 L731 336.8 L730 335.6 L729 334.3 L728 332.9 L727 331.5 L726 330.1 L725 328.7 L724 327.2 L723 325.7 L722 324.2 L721 322.7 L720 321.2 L719 319.6 L718 318.1 L717 316.6 L716 315.1 L715 313.6 L714 312.1 L713 310.6 L712 309.2 L711 307.8 L710 306.5 L709 305.1 L708 303.9 L707 302.6 L706 301.4 L705 300.3 L704 299.2 L703 298.2 L702 297.2 L701 296.3 L700 295.5 L699 294.7 L698 294.0 L697 293.4 L696 292.9 L695 292.4 L694 292.1 L693 291.8 L692 291.6 L691 291.5 L690 291.4 L689 291.5 L688 291.6 L687 291.8 L686 292.0 L685 292.4 L684 292.8 L683 293.3 L682 293.9 L681 294.5 L680 295.2 L679 295.9 L678 296.8 L677 297.6 L676 298.6 L675 299.6 L674 300.6 L673 301.7 L672 302.9 L671 304.0 L670 305.2 L669 306.5 L668 307.7 L667 309.0 L666 310.3 L665 311.6 L664 312.9 L663 314.3 L662 315.6 L661 316.9 L660 318.3 L659 319.6 L658 320.9 L657 322.3 L656 323.6 L655 324.8 L654 326.1 L653 327.3 L652 328.5 L651 329.7 L650 330.8 L649 331.9 L648 333.0 L647 334.0 L646 335.0 L645 336.0 L644 336.9 L643 337.8 L642 338.7 L641 339.5 L640 340.3 L639 341.1 L638 341.8 L637 342.5 L636 343.1 L635 343.8 L634 344.4 L633 345.0 L632 345.5 L631 346.0 L630 346.5 L629 346.9 L628 347.3 L627 347.7 L626 348.0 L625 348.4 L624 348.6 L623 348.9 L622 349.1 L621 349.3 L620 349.5 L619 349.6 L618 349.7 L617 349.8 L616 349.8 L615 349.8 L614 349.8 L613 349.8 L612 349.7 L611 349.6 L610 349.5 L609 349.4 L608 349.2 L607 349.0 L606 348.8 L605 348.6 L604 348.4 L603 348.1 L602 347.8 L601 347.5 L600 347.2 L599 346.8 L598 346.5 L597 346.1 L596 345.7 L595 345.3 L594 344.9 L593 344.4 L592 344.0 L591 343.5 L590 343.1 L589 342.6 L588 342.1 L587 341.6 L586 341.0 L585 340.5 L584 340.0 L583 339.4 L582 338.9 L581 338.3 L580 337.8 L579 337.2 L578 336.7 L577 336.1 L576 335.5 L575 334.9 L574 334.4 L573 333.8 L572 333.2 L571 332.6 L570 332.0 L569 331.5 L568 330.9 L567 330.3 L566 329.8 L565 329.2 L564 328.7 L563 328.1 L562 327.6 L561 327.0 L560 326.5 L559 326.0 L558 325.5 L557 325.0 L556 324.5 L555 324.1 L554 323.6 L553 323.2 L552 322.8 L551 322.3 L550 321.9 L549 321.5 L548 321.2 L547 320.8 L546 320.4 L545 320.1 L544 319.7 L543 319.4 L542 319.1 L541 318.8 L540 318.5 L539 318.2 L538 318.0 L537 317.7 L536 317.5 L535 317.2 L534 317.0 L533 316.8 L532 316.6 L531 316.4 L530 316.2 L529 316.0 L528 315.8 L527 315.6 L526 315.5 L525 315.3 L524 315.2 L523 315.1 L522 314.9 L521 314.8 L520 314.7 L519 314.6 L518 314.5 L517 314.4 L516 314.4 L515 314.3 L514 314.2 L513 314.2 L512 314.1 L511 314.1 L510 314.0 L509 314.0 L508 314.0 L507 314.0 L506 314.0 L505 314.0 L504 313.9 L503 314.0 L502 314.0 L501 314.0 L500 314.0 L499 314.0 L498 314.0 L497 314.1 L496 314.1 L495 314.2 L494 314.2 L493 314.2 L492 314.3 L491 314.4 L490 314.4 L489 314.5 L488 314.5 L487 314.6 L486 314.7 L485 314.8 L484 314.8 L483 314.9 L482 315.0 L481 315.1 L480 315.2 L479 315.3 L478 315.4 L477 315.4 L476 315.5 L475 315.6 L474 315.7 L473 315.8 L472 315.9 L471 316.0 L470 316.1 L469 316.2 L468 316.3 L467 316.4 L466 316.5 L465 316.6 L464 316.7 L463 316.8 L462 316.9 L461 317.0 L460 317.1 L459 317.2 L458 317.3 L457 317.4 L456 317.5 L455 317.6 L454 317.7 L453 317.8 L452 317.9 L451 318.0 L450 318.0 L449 318.1 L448 318.2 L447 318.3 L446 318.4 L445 318.4 L444 318.5 L443 318.6 L442 318.6 L441 318.7 L440 318.7 Z" fill="#f6e81e"/>
</g>
<ellipse cx="491.6" cy="342.8" rx="12.5" ry="7.6" fill="url(#blob)"/>
<ellipse cx="561.2" cy="281.2" rx="12.5" ry="7.6" fill="url(#blob)"/>
<ellipse cx="677.6" cy="343.0" rx="12.5" ry="7.6" fill="url(#blob)"/>
<ellipse cx="850.4" cy="296.0" rx="12.5" ry="7.6" fill="url(#blob)"/>
</g>
<path d="M445.5 373.0 h-2" stroke="#333" stroke-width="0.8"/>
<text x="440" y="375.5" font-size="7" fill="#262626" text-anchor="end">0</text>
<path d="M445.5 342.8 h-2" stroke="#333" stroke-width="0.8"/>
<text x="440" y="345.3" font-size="7" fill="#262626" text-anchor="end">2</text>
<path d="M445.5 311.6 h-2" stroke="#333" stroke-width="0.8"/>
<text x="440" y="314.1" font-size="7" fill="#262626" text-anchor="end">4</text>
<path d="M445.5 280.6 h-2" stroke="#333" stroke-width="0.8"/>
<text x="440" y="283.1" font-size="7" fill="#262626" text-anchor="end">6</text>
<text transform="translate(423,319.5) rotate(-90)" font-size="7.2" fill="#262626" text-anchor="middle">Frequency (kHz)</text>
<text x="445.0" y="382.8" font-size="7" fill="#262626" text-anchor="middle">0</text>
<text x="491.3" y="382.8" font-size="7" fill="#262626" text-anchor="middle">0.2</text>
<text x="537.6" y="382.8" font-size="7" fill="#262626" text-anchor="middle">0.4</text>
<text x="583.9" y="382.8" font-size="7" fill="#262626" text-anchor="middle">0.6</text>
<text x="630.2" y="382.8" font-size="7" fill="#262626" text-anchor="middle">0.8</text>
<text x="676.5" y="382.8" font-size="7" fill="#262626" text-anchor="middle">1.0</text>
<text x="722.8" y="382.8" font-size="7" fill="#262626" text-anchor="middle">1.2</text>
<text x="769.1" y="382.8" font-size="7" fill="#262626" text-anchor="middle">1.4</text>
<text x="815.4" y="382.8" font-size="7" fill="#262626" text-anchor="middle">1.6</text>
<text x="861.7" y="382.8" font-size="7" fill="#262626" text-anchor="middle">1.8</text>
<text x="908.0" y="382.8" font-size="7" fill="#262626" text-anchor="middle">2.0</text>
<text x="674.5" y="398" font-size="7" fill="#262626" text-anchor="middle">Time (s)</text>
<rect x="440" y="405.5" width="468" height="121.5" fill="#fff"/>
<rect x="447" y="421.8" width="461" height="9.2" fill="#f7f7f7"/>
<rect x="447" y="456" width="461" height="8" fill="#f4f4f4"/>
<path d="M491.3 413 V527.5" stroke="#d6d6d6" stroke-width="0.8"/>
<path d="M537.6 413 V527.5" stroke="#d6d6d6" stroke-width="0.8"/>
<path d="M583.9 413 V527.5" stroke="#d6d6d6" stroke-width="0.8"/>
<path d="M630.2 413 V527.5" stroke="#d6d6d6" stroke-width="0.8"/>
<path d="M676.5 413 V527.5" stroke="#d6d6d6" stroke-width="0.8"/>
<path d="M722.8 413 V527.5" stroke="#d6d6d6" stroke-width="0.8"/>
<path d="M769.1 413 V527.5" stroke="#d6d6d6" stroke-width="0.8"/>
<path d="M815.4 413 V527.5" stroke="#d6d6d6" stroke-width="0.8"/>
<path d="M861.7 413 V527.5" stroke="#d6d6d6" stroke-width="0.8"/>
<rect x="440.3" y="413" width="5" height="115" fill="#6e6e6e"/>
<rect x="434.3" y="405.4" width="473.7" height="7.6" fill="#4a4a4a"/>
<rect x="434.3" y="439.2" width="473.7" height="7.8" fill="#4a4a4a"/>
<text x="440" y="411.6" font-size="6.6" font-weight="bold" fill="#fff">Fextrema</text>
<text x="440" y="445.4" font-size="6.6" font-weight="bold" fill="#fff">Atom</text>
<path d="M445 527.8 H908 V405.5" fill="none" stroke="#4a4a4a" stroke-width="1"/>
<path d="M689.2 423.2 L685.2 430.2 L693.2 430.2 Z" fill="none" stroke="#2468a6" stroke-width="0.9"/>
<text x="689.5" y="436.6" font-size="6.6" fill="#2c7bbd">true</text>
<path d="M748.5 423.2 L744.5 430.2 L752.5 430.2 Z" fill="none" stroke="#2468a6" stroke-width="0.9"/>
<text x="748.8" y="436.6" font-size="6.6" fill="#2c7bbd">true</text>
<path d="M797.9 423.2 L793.9 430.2 L801.9 430.2 Z" fill="none" stroke="#2468a6" stroke-width="0.9"/>
<text x="798.2" y="436.6" font-size="6.6" fill="#2c7bbd">true</text>
<path d="M843.1 423.2 L839.1 430.2 L847.1 430.2 Z" fill="none" stroke="#2468a6" stroke-width="0.9"/>
<text x="843.4" y="436.6" font-size="6.6" fill="#2c7bbd">true</text>
<path d="M881.2 423.2 L877.2 430.2 L885.2 430.2 Z" fill="none" stroke="#2468a6" stroke-width="0.9"/>
<text x="881.5" y="436.6" font-size="6.6" fill="#2c7bbd">true</text>
<path d="M613.7 423.2 L609.7 430.2 L617.7 430.2 Z" fill="none" stroke="#2468a6" stroke-width="0.9"/>
<text x="614.0" y="436.6" font-size="6.6" fill="#2c7bbd">true</text>
<path d="M524.0 423.2 L520.0 430.2 L528.0 430.2 Z" fill="none" stroke="#2468a6" stroke-width="0.9"/>
<text x="524.3" y="436.6" font-size="6.6" fill="#2c7bbd">true</text>
<rect x="479.1" y="456.3" width="26.4" height="7.4" fill="#d6e8f6"/>
<rect x="480.1" y="457.3" width="24.4" height="5.4" fill="#2277c0"/>
<text x="479.9" y="470.5" font-size="6.6" fill="#2c6fae">1</text>
<rect x="548.3" y="456.3" width="25.7" height="7.4" fill="#d6e8f6"/>
<rect x="549.3" y="457.3" width="23.7" height="5.4" fill="#2277c0"/>
<text x="549.1" y="470.5" font-size="6.6" fill="#2c6fae">2</text>
<rect x="663.3" y="456.3" width="27.8" height="7.4" fill="#d6e8f6"/>
<rect x="664.3" y="457.3" width="25.8" height="5.4" fill="#2277c0"/>
<text x="664.1" y="470.5" font-size="6.6" fill="#2c6fae">3</text>
<rect x="837.6" y="456.3" width="25.0" height="7.4" fill="#d6e8f6"/>
<rect x="838.6" y="457.3" width="23.0" height="5.4" fill="#2277c0"/>
<text x="838.4" y="470.5" font-size="6.6" fill="#2c6fae">4</text>
<path d="M445.0 528 v2" stroke="#333" stroke-width="0.8"/>
<text x="445.0" y="537" font-size="7" fill="#262626" text-anchor="middle">0</text>
<path d="M491.3 528 v2" stroke="#333" stroke-width="0.8"/>
<text x="491.3" y="537" font-size="7" fill="#262626" text-anchor="middle">0.2</text>
<path d="M537.6 528 v2" stroke="#333" stroke-width="0.8"/>
<text x="537.6" y="537" font-size="7" fill="#262626" text-anchor="middle">0.4</text>
<path d="M583.9 528 v2" stroke="#333" stroke-width="0.8"/>
<text x="583.9" y="537" font-size="7" fill="#262626" text-anchor="middle">0.6</text>
<path d="M630.2 528 v2" stroke="#333" stroke-width="0.8"/>
<text x="630.2" y="537" font-size="7" fill="#262626" text-anchor="middle">0.8</text>
<path d="M676.5 528 v2" stroke="#333" stroke-width="0.8"/>
<text x="676.5" y="537" font-size="7" fill="#262626" text-anchor="middle">1.0</text>
<path d="M722.8 528 v2" stroke="#333" stroke-width="0.8"/>
<text x="722.8" y="537" font-size="7" fill="#262626" text-anchor="middle">1.2</text>
<path d="M769.1 528 v2" stroke="#333" stroke-width="0.8"/>
<text x="769.1" y="537" font-size="7" fill="#262626" text-anchor="middle">1.4</text>
<path d="M815.4 528 v2" stroke="#333" stroke-width="0.8"/>
<text x="815.4" y="537" font-size="7" fill="#262626" text-anchor="middle">1.6</text>
<path d="M861.7 528 v2" stroke="#333" stroke-width="0.8"/>
<text x="861.7" y="537" font-size="7" fill="#262626" text-anchor="middle">1.8</text>
<path d="M908.0 528 v2" stroke="#333" stroke-width="0.8"/>
<text x="908.0" y="537" font-size="7" fill="#262626" text-anchor="middle">2.0</text>
<text x="674.5" y="553" font-size="7" fill="#262626" text-anchor="middle">Time (s)</text>
</svg>

<div class="a" style="left:922.5px;top:19px;width:1px;height:544px;background:#cdcdcd;"></div>
<div class="a" style="left:76px;top:19px;width:1px;height:544px;background:#d4d4d4;"></div>
</body></html>
